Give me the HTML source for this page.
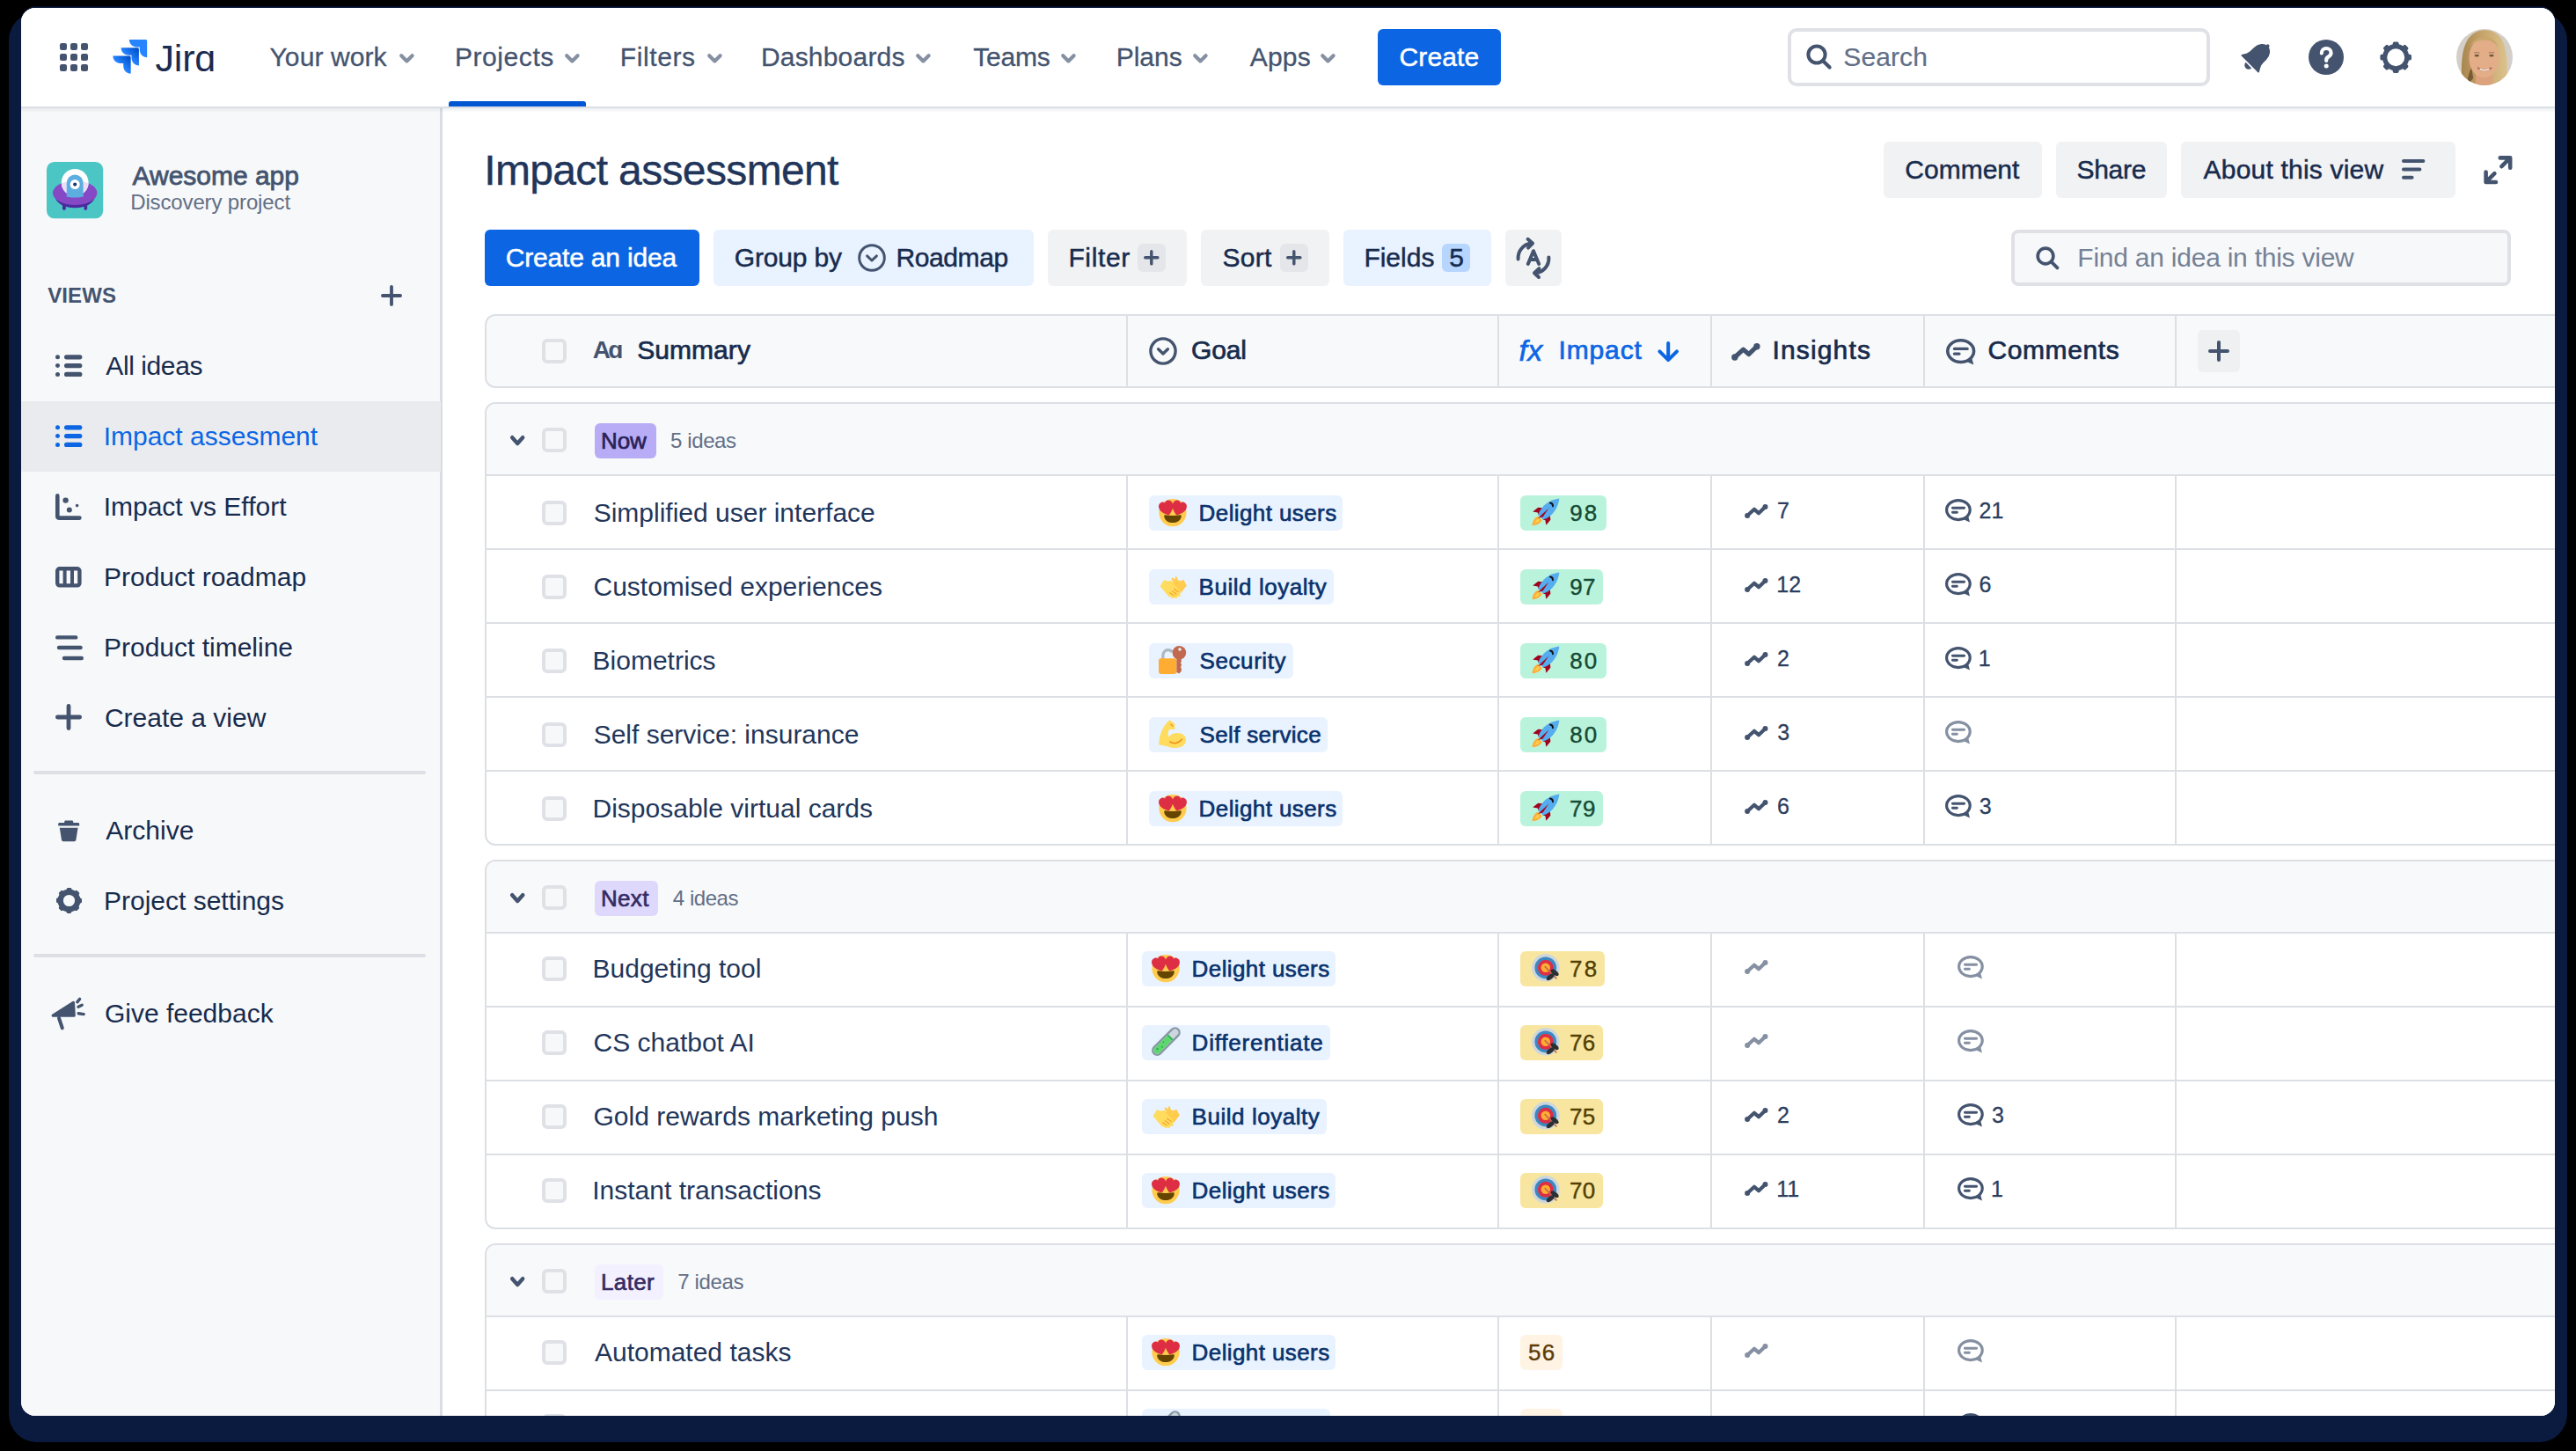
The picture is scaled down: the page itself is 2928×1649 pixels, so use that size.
<!DOCTYPE html><html><head><meta charset="utf-8"><title>Impact assessment</title><style>
html,body{margin:0;padding:0}
body{width:2928px;height:1649px;background:#000;position:relative;overflow:hidden;font-family:"Liberation Sans",sans-serif}
.frame{position:absolute;left:9.5px;top:14px;width:2908.5px;height:1624.5px;background:#0B1B3F;border-radius:32px}
.win{position:absolute;left:24px;top:9px;width:2880px;height:1600px;border-radius:16px;overflow:hidden;background:#fff;box-shadow:0 -1.5px 0 0 #0B1B3F}
.app{position:absolute;left:0;top:0;width:1440px;height:800px;zoom:2;overflow:hidden}
.t{position:absolute;white-space:nowrap}
.b{position:absolute}
.i{position:absolute;overflow:visible}

</style></head><body><div class="frame"></div><div class="win"><div class="app">
<div class="b" style="left:0px;top:56px;width:238.5px;height:744px;background:#F7F8F9"></div>
<div class="b" style="left:238.1px;top:56px;width:1.6px;height:744px;background:#D9DDE3"></div>
<div class="b" style="left:0px;top:0px;width:1440px;height:56px;background:#fff"></div>
<div class="b" style="left:0px;top:56px;width:1440px;height:1px;background:#DCDFE4"></div>
<div class="b" style="left:0px;top:57px;width:1440px;height:2.5px;background:linear-gradient(rgba(9,30,66,0.07),rgba(9,30,66,0))"></div>
<svg class="i" style="left:22px;top:20px;" width="16" height="16" viewBox="0 0 16 16"><rect x="0" y="0" width="4" height="4" rx="1.1" fill="#44546F"/><rect x="6" y="0" width="4" height="4" rx="1.1" fill="#44546F"/><rect x="12" y="0" width="4" height="4" rx="1.1" fill="#44546F"/><rect x="0" y="6" width="4" height="4" rx="1.1" fill="#44546F"/><rect x="6" y="6" width="4" height="4" rx="1.1" fill="#44546F"/><rect x="12" y="6" width="4" height="4" rx="1.1" fill="#44546F"/><rect x="0" y="12" width="4" height="4" rx="1.1" fill="#44546F"/><rect x="6" y="12" width="4" height="4" rx="1.1" fill="#44546F"/><rect x="12" y="12" width="4" height="4" rx="1.1" fill="#44546F"/></svg>
<svg class="i" style="left:52.3px;top:18px;" width="19.5" height="19.4" viewBox="0 0 19.5 19.4"><defs><linearGradient id="jg1" x1="1" y1="0" x2="0.45" y2="0.55"><stop offset="0.18" stop-color="#0052CC"/><stop offset="1" stop-color="#2684FF"/></linearGradient></defs><g transform="scale(0.826)"><g transform="translate(10.8 0)"><path d="M11.3 0 H0 C0 2.8 2.3 5.1 5.1 5.1 H7.2 V7.1 C7.2 9.9 9.5 12.2 12.3 12.2 V1 C12.3 0.4 11.9 0 11.3 0 Z" fill="#2684FF"/></g><g transform="translate(5.2 5.6)"><path d="M11.3 0 H0 C0 2.8 2.3 5.1 5.1 5.1 H7.2 V7.1 C7.2 9.9 9.5 12.2 12.3 12.2 V1 C12.3 0.4 11.9 0 11.3 0 Z" fill="url(#jg1)"/></g><g transform="translate(-0.4 11.2)"><path d="M11.3 0 H0 C0 2.8 2.3 5.1 5.1 5.1 H7.2 V7.1 C7.2 9.9 9.5 12.2 12.3 12.2 V1 C12.3 0.4 11.9 0 11.3 0 Z" fill="url(#jg1)"/></g></g></svg>
<div class="t" style="left:76.27px;top:11.3px;font-size:21.5px;line-height:34px;color:#1B2B50;letter-spacing:-0.11px">Jirɑ</div>
<div class="t" style="left:141.25px;top:16px;font-size:15px;line-height:24px;color:#44546F;letter-spacing:0.05px;-webkit-text-stroke:0.15px #44546F">Your work</div>
<svg class="i" style="left:214.9px;top:26px;" width="8.4" height="5.4" viewBox="0 0 8.4 5.4"><path d="M1.1 1.1 L4.2 4.2 L7.3 1.1" fill="none" stroke="#8590A2" stroke-width="2.1" stroke-linecap="round" stroke-linejoin="round"/></svg>
<div class="t" style="left:246.45px;top:16px;font-size:15px;line-height:24px;color:#44546F;letter-spacing:0.29px;-webkit-text-stroke:0.15px #44546F">Projects</div>
<svg class="i" style="left:309.2px;top:26px;" width="8.4" height="5.4" viewBox="0 0 8.4 5.4"><path d="M1.1 1.1 L4.2 4.2 L7.3 1.1" fill="none" stroke="#8590A2" stroke-width="2.1" stroke-linecap="round" stroke-linejoin="round"/></svg>
<div class="t" style="left:340.35px;top:16px;font-size:15px;line-height:24px;color:#44546F;letter-spacing:0.31px;-webkit-text-stroke:0.15px #44546F">Filters</div>
<svg class="i" style="left:389.8px;top:26px;" width="8.4" height="5.4" viewBox="0 0 8.4 5.4"><path d="M1.1 1.1 L4.2 4.2 L7.3 1.1" fill="none" stroke="#8590A2" stroke-width="2.1" stroke-linecap="round" stroke-linejoin="round"/></svg>
<div class="t" style="left:420.45px;top:16px;font-size:15px;line-height:24px;color:#44546F;letter-spacing:0.1px;-webkit-text-stroke:0.15px #44546F">Dashboards</div>
<svg class="i" style="left:508.7px;top:26px;" width="8.4" height="5.4" viewBox="0 0 8.4 5.4"><path d="M1.1 1.1 L4.2 4.2 L7.3 1.1" fill="none" stroke="#8590A2" stroke-width="2.1" stroke-linecap="round" stroke-linejoin="round"/></svg>
<div class="t" style="left:541.15px;top:16px;font-size:15px;line-height:24px;color:#44546F;letter-spacing:-0.12px;-webkit-text-stroke:0.15px #44546F">Teams</div>
<svg class="i" style="left:591px;top:26px;" width="8.4" height="5.4" viewBox="0 0 8.4 5.4"><path d="M1.1 1.1 L4.2 4.2 L7.3 1.1" fill="none" stroke="#8590A2" stroke-width="2.1" stroke-linecap="round" stroke-linejoin="round"/></svg>
<div class="t" style="left:622.35px;top:16px;font-size:15px;line-height:24px;color:#44546F;letter-spacing:-0.01px;-webkit-text-stroke:0.15px #44546F">Plans</div>
<svg class="i" style="left:666px;top:26px;" width="8.4" height="5.4" viewBox="0 0 8.4 5.4"><path d="M1.1 1.1 L4.2 4.2 L7.3 1.1" fill="none" stroke="#8590A2" stroke-width="2.1" stroke-linecap="round" stroke-linejoin="round"/></svg>
<div class="t" style="left:698.35px;top:16px;font-size:15px;line-height:24px;color:#44546F;letter-spacing:0.1px;-webkit-text-stroke:0.15px #44546F">Apps</div>
<svg class="i" style="left:738.5px;top:26px;" width="8.4" height="5.4" viewBox="0 0 8.4 5.4"><path d="M1.1 1.1 L4.2 4.2 L7.3 1.1" fill="none" stroke="#8590A2" stroke-width="2.1" stroke-linecap="round" stroke-linejoin="round"/></svg>
<div class="b" style="left:243px;top:53px;width:78px;height:3px;background:#0056D2;border-radius:1.5px 1.5px 0 0"></div>
<div class="b" style="left:771px;top:12px;width:70px;height:32px;background:#0C66E4;border-radius:3px"></div>
<div class="t" style="left:783.27px;top:16px;font-size:15px;line-height:24px;color:#fff;letter-spacing:0.07px;-webkit-text-stroke:0.24px #fff">Create</div>
<div class="b" style="left:1004px;top:11.25px;width:240px;height:33.25px;border:2px solid #DFE1E6;border-radius:5px;box-sizing:border-box;background:#fff"></div>
<svg class="i" style="left:1014.6px;top:20.6px;" width="14.4" height="14.4" viewBox="0 0 14.4 14.4"><g transform="scale(1)"><circle cx="6" cy="6" r="4.8" fill="none" stroke="#44546F" stroke-width="2"/><path d="M9.6 9.6 L13.3 13.3" stroke="#44546F" stroke-width="2.1" stroke-linecap="round"/></g></svg>
<div class="t" style="left:1035.67px;top:16px;font-size:15px;line-height:24px;color:#626F86;letter-spacing:0.05px;-webkit-text-stroke:0.1px #626F86">Search</div>
<svg class="i" style="left:1262.5px;top:15px;" width="24" height="24" viewBox="0 0 24 24"><g transform="translate(8.6 12.4) rotate(45)"><path d="M-6.6 6 H6.6 L5.2 3.6 C4.7 2.7 4.5 1.8 4.5 0.4 V-1.8 C4.5 -5.2 2.4 -7.6 0 -7.6 C-2.4 -7.6 -4.5 -5.2 -4.5 -1.8 V0.4 C-4.5 1.8 -4.7 2.7 -5.2 3.6 Z" fill="#44546F" stroke="#44546F" stroke-width="0.9" stroke-linejoin="round"/><circle cx="0" cy="-8.1" r="0.95" fill="#44546F"/><path d="M-2.3 7.3 A2.3 2.3 0 0 0 2.3 7.3 Z" fill="#44546F"/></g></svg>
<svg class="i" style="left:1300px;top:18px;" width="20" height="20" viewBox="0 0 20 20"><circle cx="10" cy="10" r="10" fill="#44546F"/><path d="M7.4 7.7 C7.4 6.1 8.6 5 10.1 5 C11.6 5 12.8 6.1 12.8 7.5 C12.8 8.8 12 9.3 11.2 9.8 C10.5 10.2 10.1 10.7 10.1 11.5 V12" fill="none" stroke="#fff" stroke-width="2.1" stroke-linecap="round"/><circle cx="10.1" cy="15" r="1.25" fill="#fff"/></svg>
<svg class="i" style="left:1340.6px;top:19.2px;" width="18.2" height="18.2" viewBox="0 0 18.2 18.2"><rect x="7.4" y="0.2" width="3.4" height="3.6" rx="0.9" fill="#44546F" transform="rotate(0 9.1 9.1)"/><rect x="7.4" y="0.2" width="3.4" height="3.6" rx="0.9" fill="#44546F" transform="rotate(45 9.1 9.1)"/><rect x="7.4" y="0.2" width="3.4" height="3.6" rx="0.9" fill="#44546F" transform="rotate(90 9.1 9.1)"/><rect x="7.4" y="0.2" width="3.4" height="3.6" rx="0.9" fill="#44546F" transform="rotate(135 9.1 9.1)"/><rect x="7.4" y="0.2" width="3.4" height="3.6" rx="0.9" fill="#44546F" transform="rotate(180 9.1 9.1)"/><rect x="7.4" y="0.2" width="3.4" height="3.6" rx="0.9" fill="#44546F" transform="rotate(225 9.1 9.1)"/><rect x="7.4" y="0.2" width="3.4" height="3.6" rx="0.9" fill="#44546F" transform="rotate(270 9.1 9.1)"/><rect x="7.4" y="0.2" width="3.4" height="3.6" rx="0.9" fill="#44546F" transform="rotate(315 9.1 9.1)"/><circle cx="9.1" cy="9.1" r="6.3" fill="none" stroke="#44546F" stroke-width="2.6"/></svg>
<svg class="i" style="left:1384px;top:12px;" width="32" height="32" viewBox="0 0 32 32"><defs><clipPath id="avc"><circle cx="16" cy="16" r="16"/></clipPath><linearGradient id="hairg" x1="0" y1="0" x2="1" y2="0"><stop offset="0" stop-color="#A8864F"/><stop offset="0.5" stop-color="#C9A66C"/><stop offset="1" stop-color="#DCC38E"/></linearGradient></defs><g clip-path="url(#avc)"><rect width="32" height="32" fill="#D3CFC8"/><path d="M3.5 32 C2.5 24 2.8 14 5 9 C7 3.5 11 0.6 16.2 0.6 C21.6 0.6 25.4 3.6 27.2 9 C29 14.5 29.4 24 28.6 32 Z" fill="url(#hairg)"/><path d="M6 32 C6.5 27 7.4 24 8.6 22 L9.6 28 Z" fill="#5E4426" opacity="0.7"/><rect x="11" y="25" width="9.6" height="8" fill="#DCA27E"/><ellipse cx="15.7" cy="16.4" rx="8.5" ry="11.4" fill="#E2AD87"/><path d="M7.6 10 C9.5 6 12.5 4.6 15.8 4.6 C19.6 4.6 22.5 6.6 24 10.4 C21.8 7.6 19 6.3 16 6.3 C12.8 6.3 10 7.5 7.6 10 Z" fill="#C9A66C"/><ellipse cx="11.6" cy="15.1" rx="1.3" ry="0.7" fill="#6E5A3E"/><ellipse cx="20" cy="15.1" rx="1.3" ry="0.7" fill="#6E5A3E"/><path d="M10 13.6 Q11.6 12.9 13.2 13.6 M18.4 13.6 Q20 12.9 21.6 13.6" fill="none" stroke="#A07E58" stroke-width="0.6"/><path d="M12.3 22.2 Q16 24.6 19.8 22.2" fill="none" stroke="#B56D5C" stroke-width="1" stroke-linecap="round"/><path d="M13.6 22.9 Q16 23.9 18.4 22.9" fill="none" stroke="#F4EEE8" stroke-width="0.8" stroke-linecap="round"/></g></svg>
<svg class="i" style="left:14.5px;top:87.4px;" width="32.1" height="32.1" viewBox="0 0 32.1 32.1"><defs><clipPath id="ufoc"><ellipse cx="16.1" cy="17.6" rx="12.6" ry="6.9"/></clipPath></defs><rect width="32.1" height="32.1" rx="4.3" fill="#4BC6C4"/><rect x="9" y="22.5" width="1.9" height="4.9" rx="0.95" fill="#4A2A9E"/><rect x="21.2" y="22.5" width="1.9" height="4.9" rx="0.95" fill="#4A2A9E"/><ellipse cx="16.1" cy="19.2" rx="11.4" ry="6.9" fill="#4A2A9E"/><ellipse cx="16.1" cy="17.6" rx="12.6" ry="6.9" fill="#8549C6"/><circle cx="16.1" cy="11.7" r="7.7" fill="#fff"/><g clip-path="url(#ufoc)"><circle cx="16.1" cy="11.7" r="7.7" fill="#E8E0F6"/></g><path d="M11.4 19.6 V11.9 A4.7 4.7 0 0 1 20.8 11.9 V19.6 Z" fill="#5DAEE0"/><ellipse cx="16.1" cy="19.4" rx="4.9" ry="0.9" fill="#5DAEE0"/><circle cx="16.1" cy="12.8" r="2.75" fill="#fff"/><circle cx="16.1" cy="12.8" r="1.05" fill="#1E3A6E"/></svg>
<div class="t" style="left:63.28px;top:83.65px;font-size:15px;line-height:24px;color:#44546F;letter-spacing:-0.01px;-webkit-text-stroke:0.4px #44546F">Awesome app</div>
<div class="t" style="left:62.12px;top:100.95px;font-size:12px;line-height:19px;color:#626F86;letter-spacing:-0.07px">Discovery project</div>
<div class="t" style="left:15.12px;top:153.8px;font-size:12px;line-height:19px;color:#44546F;letter-spacing:0.04px;font-weight:700">VIEWS</div>
<svg class="i" style="left:204.7px;top:157.7px;" width="12" height="12" viewBox="0 0 12 12"><path d="M6 0.95 V11.05 M0.95 6 H11.05" stroke="#44546F" stroke-width="1.9" stroke-linecap="round"/></svg>
<svg class="i" style="left:19.7px;top:197px;" width="15.2" height="12.6" viewBox="0 0 15.2 12.6"><circle cx="1.25" cy="1.4" r="1.25" fill="#44546F"/><circle cx="1.25" cy="6.3" r="1.25" fill="#44546F"/><circle cx="1.25" cy="11.2" r="1.25" fill="#44546F"/><rect x="5" y="0.1" width="10.2" height="2.6" rx="1.3" fill="#44546F"/><rect x="5" y="5" width="10.2" height="2.6" rx="1.3" fill="#44546F"/><rect x="5" y="9.9" width="10.2" height="2.6" rx="1.3" fill="#44546F"/></svg>
<div class="t" style="left:48.18px;top:191.3px;font-size:15px;line-height:24px;color:#172B4D;letter-spacing:-0.21px">All ideas</div>
<div class="b" style="left:0px;top:223.3px;width:238.5px;height:40px;background:#E9EBEE"></div>
<svg class="i" style="left:19.7px;top:237px;" width="15.2" height="12.6" viewBox="0 0 15.2 12.6"><circle cx="1.25" cy="1.4" r="1.25" fill="#0C66E4"/><circle cx="1.25" cy="6.3" r="1.25" fill="#0C66E4"/><circle cx="1.25" cy="11.2" r="1.25" fill="#0C66E4"/><rect x="5" y="0.1" width="10.2" height="2.6" rx="1.3" fill="#0C66E4"/><rect x="5" y="5" width="10.2" height="2.6" rx="1.3" fill="#0C66E4"/><rect x="5" y="9.9" width="10.2" height="2.6" rx="1.3" fill="#0C66E4"/></svg>
<div class="t" style="left:46.83px;top:231.3px;font-size:15px;line-height:24px;color:#0C66E4">Impact assesment</div>
<svg class="i" style="left:19.7px;top:276px;" width="15" height="15" viewBox="0 0 15 15"><path d="M1.15 1.2 V12.9 C1.15 13.5 1.5 13.8 2 13.8 H13.7" fill="none" stroke="#44546F" stroke-width="2.3" stroke-linecap="round"/><circle cx="5.8" cy="3.8" r="1.6" fill="#44546F"/><circle cx="7.9" cy="9.3" r="1.5" fill="#44546F"/><circle cx="12.3" cy="6.8" r="0.9" fill="#44546F"/></svg>
<div class="t" style="left:46.83px;top:271.3px;font-size:15px;line-height:24px;color:#172B4D">Impact vs Effort</div>
<svg class="i" style="left:19.7px;top:317.4px;" width="15" height="12" viewBox="0 0 15 12"><rect x="1.1" y="1.1" width="12.6" height="9.6" rx="1.3" fill="none" stroke="#44546F" stroke-width="2.2"/><path d="M5.3 1.1 V10.7 M9.5 1.1 V10.7" stroke="#44546F" stroke-width="2"/></svg>
<div class="t" style="left:46.98px;top:311.3px;font-size:15px;line-height:24px;color:#172B4D">Product roadmap</div>
<svg class="i" style="left:19.3px;top:356.3px;" width="16" height="14" viewBox="0 0 16 14"><path d="M1.1 1.2 H11.6 M2 7 H14.3 M5 13 H14.9" stroke="#44546F" stroke-width="2.2" stroke-linecap="round"/></svg>
<div class="t" style="left:46.98px;top:351.3px;font-size:15px;line-height:24px;color:#172B4D">Product timeline</div>
<svg class="i" style="left:19.3px;top:395.7px;" width="15" height="15" viewBox="0 0 15 15"><path d="M7.5 1.2 V13.8 M1.2 7.5 H13.8" stroke="#44546F" stroke-width="2.4" stroke-linecap="round"/></svg>
<div class="t" style="left:47.45px;top:391.3px;font-size:15px;line-height:24px;color:#172B4D">Create a view</div>
<div class="b" style="left:7px;top:433.5px;width:223px;height:2px;background:#DCDFE4;border-radius:1px"></div>
<svg class="i" style="left:20.9px;top:461.4px;" width="12.2" height="12.2" viewBox="0 0 12.2 12.2"><path d="M4.3 0.3 H7.9 C8.3 0.3 8.6 0.6 8.6 1 V1.5 H11.4 C11.8 1.5 12.1 1.8 12.1 2.2 V3.3 H0.1 V2.2 C0.1 1.8 0.4 1.5 0.8 1.5 H3.6 V1 C3.6 0.6 3.9 0.3 4.3 0.3 Z" fill="#44546F"/><path d="M0.9 4.4 H11.3 L10.2 11.3 C10.1 11.8 9.7 12.1 9.2 12.1 H3 C2.5 12.1 2.1 11.8 2 11.3 Z" fill="#44546F"/></svg>
<div class="t" style="left:48.18px;top:455.55px;font-size:15px;line-height:24px;color:#172B4D">Archive</div>
<svg class="i" style="left:19.95px;top:500.2px;" width="14.5" height="14.5" viewBox="0 0 14.5 14.5"><rect x="5.9" y="0" width="2.8" height="3" rx="0.7" fill="#44546F" transform="rotate(0 7.25 7.25)"/><rect x="5.9" y="0" width="2.8" height="3" rx="0.7" fill="#44546F" transform="rotate(45 7.25 7.25)"/><rect x="5.9" y="0" width="2.8" height="3" rx="0.7" fill="#44546F" transform="rotate(90 7.25 7.25)"/><rect x="5.9" y="0" width="2.8" height="3" rx="0.7" fill="#44546F" transform="rotate(135 7.25 7.25)"/><rect x="5.9" y="0" width="2.8" height="3" rx="0.7" fill="#44546F" transform="rotate(180 7.25 7.25)"/><rect x="5.9" y="0" width="2.8" height="3" rx="0.7" fill="#44546F" transform="rotate(225 7.25 7.25)"/><rect x="5.9" y="0" width="2.8" height="3" rx="0.7" fill="#44546F" transform="rotate(270 7.25 7.25)"/><rect x="5.9" y="0" width="2.8" height="3" rx="0.7" fill="#44546F" transform="rotate(315 7.25 7.25)"/><circle cx="7.25" cy="7.25" r="4.9" fill="none" stroke="#44546F" stroke-width="3.2"/></svg>
<div class="t" style="left:46.98px;top:495.55px;font-size:15px;line-height:24px;color:#172B4D">Project settings</div>
<div class="b" style="left:7px;top:537.5px;width:223px;height:2px;background:#DCDFE4;border-radius:1px"></div>
<svg class="i" style="left:17px;top:562px;" width="19.5" height="19.5" viewBox="0 0 19.5 19.5"><path d="M1.1 10.6 L12.7 3.2 L13.1 10.6 Z" fill="#44546F" stroke="#44546F" stroke-width="1.6" stroke-linejoin="round"/><path d="M4.5 12 L6.4 17.7" stroke="#44546F" stroke-width="2" stroke-linecap="round"/><path d="M14.9 2.9 L16.3 1.2 M15.5 5.6 L17.6 4.6 M15.6 9.4 L18.6 9.8" stroke="#44546F" stroke-width="1.7" stroke-linecap="round"/></svg>
<div class="t" style="left:47.45px;top:559.5px;font-size:15px;line-height:24px;color:#172B4D">Give feedback</div>
<div class="t" style="left:263.1px;top:73.5px;font-size:24px;line-height:38px;color:#21355A;letter-spacing:-0.32px;-webkit-text-stroke:0.2px #21355A">Impact assessment</div>
<div class="b" style="left:1058.6px;top:76px;width:89.9px;height:32px;background:#F1F2F4;border-radius:3px"></div>
<div class="t" style="left:1070.67px;top:80px;font-size:15px;line-height:24px;color:#172B4D;-webkit-text-stroke:0.24px #172B4D">Comment</div>
<div class="b" style="left:1156.4px;top:76px;width:63px;height:32px;background:#F1F2F4;border-radius:3px"></div>
<div class="t" style="left:1168.24px;top:80px;font-size:15px;line-height:24px;color:#172B4D;letter-spacing:-0.14px;-webkit-text-stroke:0.24px #172B4D">Share</div>
<div class="b" style="left:1227.5px;top:76px;width:155.9px;height:32px;background:#F1F2F4;border-radius:3px"></div>
<div class="t" style="left:1240.29px;top:80px;font-size:15px;line-height:24px;color:#172B4D;letter-spacing:0.1px;-webkit-text-stroke:0.24px #172B4D">About this view</div>
<svg class="i" style="left:1352.8px;top:86.2px;" width="13.2" height="11.4" viewBox="0 0 13.2 11.4"><path d="M1 1 H12.2 M1 5.7 H10.2 M1 10.4 H5.8" stroke="#44546F" stroke-width="2" stroke-linecap="round"/></svg>
<svg class="i" style="left:1399.3px;top:84px;" width="16.4" height="16.2" viewBox="0 0 16.4 16.2"><path d="M9.4 1.2 H15.1 V6.9 M15.1 1.2 L10.2 6.1 M7 15 H1.3 V9.3 M1.3 15 L6.2 10.1" fill="none" stroke="#44546F" stroke-width="2.3" stroke-linecap="round" stroke-linejoin="round"/></svg>
<div class="b" style="left:263.7px;top:126px;width:121.7px;height:32px;background:#0C66E4;border-radius:3px"></div>
<div class="t" style="left:275.37px;top:130px;font-size:15px;line-height:24px;color:#fff;letter-spacing:-0.09px;-webkit-text-stroke:0.24px #fff">Create an idea</div>
<div class="b" style="left:393.6px;top:126px;width:181.7px;height:32px;background:#E9F2FF;border-radius:3px"></div>
<div class="t" style="left:405.37px;top:130px;font-size:15px;line-height:24px;color:#172B4D;letter-spacing:-0.08px;-webkit-text-stroke:0.24px #172B4D">Group by</div>
<svg class="i" style="left:475.5px;top:134px;" width="16" height="16" viewBox="0 0 16 16"><g transform="scale(1)"><circle cx="8" cy="8" r="7.15" fill="none" stroke="#44546F" stroke-width="1.5"/><path d="M5.3 6.9 L8 9.5 L10.7 6.9" fill="none" stroke="#44546F" stroke-width="1.5" stroke-linecap="round" stroke-linejoin="round"/></g></svg>
<div class="t" style="left:497.29px;top:130px;font-size:15px;line-height:24px;color:#172B4D;letter-spacing:-0.21px;-webkit-text-stroke:0.24px #172B4D">Roadmap</div>
<div class="b" style="left:583.4px;top:126px;width:79.1px;height:32px;background:#F1F2F4;border-radius:3px"></div>
<div class="t" style="left:595.19px;top:130px;font-size:15px;line-height:24px;color:#172B4D;letter-spacing:0.32px;-webkit-text-stroke:0.24px #172B4D">Filter</div>
<div class="b" style="left:634.6px;top:134px;width:16px;height:16px;background:#E4E6EA;border-radius:3px"></div>
<svg class="i" style="left:638.2px;top:137.6px;" width="8.8" height="8.8" viewBox="0 0 8.8 8.8"><path d="M4.4 0.85 V7.95 M0.85 4.4 H7.95" stroke="#44546F" stroke-width="1.7" stroke-linecap="round"/></svg>
<div class="b" style="left:670.4px;top:126px;width:73.1px;height:32px;background:#F1F2F4;border-radius:3px"></div>
<div class="t" style="left:682.75px;top:130px;font-size:15px;line-height:24px;color:#172B4D;letter-spacing:0.14px;-webkit-text-stroke:0.24px #172B4D">Sort</div>
<div class="b" style="left:715.4px;top:134px;width:16px;height:16px;background:#E4E6EA;border-radius:3px"></div>
<svg class="i" style="left:719px;top:137.6px;" width="8.8" height="8.8" viewBox="0 0 8.8 8.8"><path d="M4.4 0.85 V7.95 M0.85 4.4 H7.95" stroke="#44546F" stroke-width="1.7" stroke-linecap="round"/></svg>
<div class="b" style="left:751.4px;top:126px;width:84.1px;height:32px;background:#E9F2FF;border-radius:3px"></div>
<div class="t" style="left:763.19px;top:130px;font-size:15px;line-height:24px;color:#172B4D;-webkit-text-stroke:0.24px #172B4D">Fields</div>
<div class="b" style="left:807.5px;top:134px;width:16px;height:16px;background:#B6D5FF;border-radius:3px"></div>
<div class="t" style="left:811.62px;top:130px;font-size:15px;line-height:24px;color:#172B4D;-webkit-text-stroke:0.24px #172B4D">5</div>
<div class="b" style="left:843.6px;top:126px;width:32px;height:32px;background:#F1F2F4;border-radius:3px"></div>
<svg class="i" style="left:849.5px;top:130.3px;" width="20" height="23.4" viewBox="0 0 20 23.4"><path d="M1.3 12.2 C1 7.5 4.3 3.6 9.2 3.3" fill="none" stroke="#44546F" stroke-width="2" stroke-linecap="round"/><path d="M6.8 0.9 L9.5 3.3 L7 5.8" fill="none" stroke="#44546F" stroke-width="2" stroke-linecap="round" stroke-linejoin="round"/><path d="M18.7 11.2 C19 15.9 15.7 19.8 10.8 20.1" fill="none" stroke="#44546F" stroke-width="2" stroke-linecap="round"/><path d="M13.2 17.6 L10.5 20.1 L13 22.5" fill="none" stroke="#44546F" stroke-width="2" stroke-linecap="round" stroke-linejoin="round"/><path d="M6.9 15 L10 7.6 L13.1 15 M8 12.5 H12" fill="none" stroke="#44546F" stroke-width="2" stroke-linecap="round" stroke-linejoin="round"/></svg>
<div class="b" style="left:1131px;top:126px;width:284.2px;height:32px;border:2px solid #DFE1E6;border-radius:4px;box-sizing:border-box;background:#F7F8F9"></div>
<svg class="i" style="left:1145px;top:135.5px;" width="13.2" height="13.2" viewBox="0 0 13.2 13.2"><g transform="scale(0.92)"><circle cx="6" cy="6" r="4.8" fill="none" stroke="#44546F" stroke-width="2"/><path d="M9.6 9.6 L13.3 13.3" stroke="#44546F" stroke-width="2.1" stroke-linecap="round"/></g></svg>
<div class="t" style="left:1168.68px;top:130px;font-size:15px;line-height:24px;color:#758195;letter-spacing:-0.12px">Find an idea in this view</div>
<div class="b" style="left:263.5px;top:174px;width:1300px;height:42px;border:1px solid #DCDFE4;border-radius:6px 0 0 6px;box-sizing:border-box;background:#F8F9FA"></div>
<div class="b" style="left:628px;top:175px;width:1px;height:40px;background:#DCDFE4"></div>
<div class="b" style="left:839px;top:175px;width:1px;height:40px;background:#DCDFE4"></div>
<div class="b" style="left:960px;top:175px;width:1px;height:40px;background:#DCDFE4"></div>
<div class="b" style="left:1081px;top:175px;width:1px;height:40px;background:#DCDFE4"></div>
<div class="b" style="left:1224px;top:175px;width:1px;height:40px;background:#DCDFE4"></div>
<div class="b" style="left:296px;top:188px;width:14px;height:14px;border:2px solid #DFE1E6;border-radius:3px;background:#F7F8F9;box-sizing:border-box"></div>
<div class="t" style="left:324.85px;top:183.3px;font-size:14px;line-height:22px;color:#44546F;letter-spacing:-1.3px;font-weight:700">Aɑ</div>
<div class="t" style="left:350.1px;top:182.6px;font-size:15px;line-height:24px;color:#172B4D;letter-spacing:0.03px;-webkit-text-stroke:0.35px #172B4D">Summary</div>
<svg class="i" style="left:641px;top:187px;" width="16" height="16" viewBox="0 0 16 16"><g transform="scale(1)"><circle cx="8" cy="8" r="7.05" fill="none" stroke="#44546F" stroke-width="1.7"/><path d="M5.3 6.9 L8 9.5 L10.7 6.9" fill="none" stroke="#44546F" stroke-width="1.7" stroke-linecap="round" stroke-linejoin="round"/></g></svg>
<div class="t" style="left:665.02px;top:182.6px;font-size:15px;line-height:24px;color:#172B4D;letter-spacing:-0.1px;-webkit-text-stroke:0.35px #172B4D">Goal</div>
<div class="t" style="left:851.27px;top:181.1px;font-size:17px;line-height:27px;color:#0C66E4;letter-spacing:0.17px;font-style:italic;-webkit-text-stroke:0.3px #0C66E4">fx</div>
<div class="t" style="left:873.8px;top:182.6px;font-size:15px;line-height:24px;color:#0C66E4;letter-spacing:0.42px;-webkit-text-stroke:0.35px #0C66E4">Impact</div>
<svg class="i" style="left:929.8px;top:189.5px;" width="12.2" height="11.6" viewBox="0 0 12.2 11.6"><path d="M6.1 1 V10.4 M1.2 5.7 L6.1 10.6 L11 5.7" fill="none" stroke="#0C66E4" stroke-width="2" stroke-linecap="round" stroke-linejoin="round"/></svg>
<svg class="i" style="left:971.8px;top:190.3px;" width="16.3" height="9.8" viewBox="0 0 16.3 9.8"><g transform="scale(1.23)"><path d="M1.55 6.5 L5.5 2.9 L8 5.1 L11.75 1.5" fill="none" stroke="#44546F" stroke-width="2.1" stroke-linecap="round" stroke-linejoin="round"/><circle cx="1.55" cy="6.5" r="1.5" fill="#44546F"/><circle cx="11.75" cy="1.5" r="1.5" fill="#44546F"/></g></svg>
<div class="t" style="left:995.2px;top:182.6px;font-size:15px;line-height:24px;color:#172B4D;letter-spacing:0.58px;-webkit-text-stroke:0.35px #172B4D">Insights</div>
<svg class="i" style="left:1093.8px;top:188.1px;" width="16.7" height="15.02" viewBox="0 0 16.7 15.02"><g transform="scale(1.12)"><ellipse cx="7.45" cy="6.3" rx="6.65" ry="5.5" fill="none" stroke="#44546F" stroke-width="1.6"/><path d="M10.4 11.6 L14 13.2 L13.1 9.9 Z" fill="#44546F"/><path d="M4.2 5.1 H10.8 M4.2 7.6 H6.7" stroke="#44546F" stroke-width="1.45" stroke-linecap="round"/></g></svg>
<div class="t" style="left:1117.72px;top:182.6px;font-size:15px;line-height:24px;color:#172B4D;letter-spacing:0.3px;-webkit-text-stroke:0.35px #172B4D">Comments</div>
<div class="b" style="left:1237px;top:183px;width:24px;height:24px;background:#EFF0F2;border-radius:3px"></div>
<svg class="i" style="left:1243px;top:189px;" width="12" height="12" viewBox="0 0 12 12"><path d="M6 1 V11 M1 6 H11" stroke="#44546F" stroke-width="2" stroke-linecap="round"/></svg>
<div class="b" style="left:263.5px;top:224px;width:1300px;height:252px;border:1px solid #DCDFE4;border-radius:6px 0 0 6px;box-sizing:border-box;background:#fff"></div>
<div class="b" style="left:264.5px;top:225px;width:1298px;height:40px;background:#F8F9FA;border-radius:5px 0 0 0"></div>
<div class="b" style="left:264.5px;top:265px;width:1298px;height:1px;background:#DCDFE4"></div>
<svg class="i" style="left:277.9px;top:243px;" width="8.2" height="5.8" viewBox="0 0 8.2 5.8"><path d="M1.1 1.1 L4.1 4.5 L7.1 1.1" fill="none" stroke="#44546F" stroke-width="2.2" stroke-linecap="round" stroke-linejoin="round"/></svg>
<div class="b" style="left:296px;top:238.5px;width:14px;height:14px;border:2px solid #DFE1E6;border-radius:3px;background:#F7F8F9;box-sizing:border-box"></div>
<div class="b" style="left:326.2px;top:236.2px;width:34.8px;height:19.6px;background:#B8ACF6;border-radius:3px"></div>
<div class="t" style="left:329.52px;top:235.4px;font-size:13px;line-height:21px;color:#2B2257;letter-spacing:-0.08px;-webkit-text-stroke:0.35px #2B2257">Now</div>
<div class="t" style="left:369.02px;top:236.5px;font-size:12px;line-height:19px;color:#626F86;letter-spacing:-0.2px">5 ideas</div>
<div class="b" style="left:628px;top:266px;width:1px;height:41px;background:#DCDFE4"></div>
<div class="b" style="left:839px;top:266px;width:1px;height:41px;background:#DCDFE4"></div>
<div class="b" style="left:960px;top:266px;width:1px;height:41px;background:#DCDFE4"></div>
<div class="b" style="left:1081px;top:266px;width:1px;height:41px;background:#DCDFE4"></div>
<div class="b" style="left:1224px;top:266px;width:1px;height:41px;background:#DCDFE4"></div>
<div class="b" style="left:296px;top:279.9px;width:14px;height:14px;border:2px solid #DFE1E6;border-radius:3px;background:#F7F8F9;box-sizing:border-box"></div>
<div class="t" style="left:325.32px;top:275px;font-size:15px;line-height:24px;color:#22365A">Simplified user interface</div>
<div class="b" style="left:641px;top:277px;width:110px;height:20px;background:#E9F2FF;border-radius:3px"></div>
<svg class="i" style="left:646.6px;top:278.5px;" width="16" height="16" viewBox="0 0 16 16"><circle cx="8" cy="8.3" r="7.8" fill="#FFCC4D"/><path d="M3.9 9.6 C5.3 9.9 6.6 10 8 10 C9.4 10 10.7 9.9 12.1 9.6 C12.5 9.5 12.9 9.7 12.9 10.2 C12.9 12 11 14 8 14 C5 14 3.1 12 3.1 10.2 C3.1 9.7 3.5 9.5 3.9 9.6 Z" fill="#664500"/><g transform="translate(3.9 3.9) rotate(-18)"><path d="M0 6.2 C-2.6 4.2 -4.1 2.7 -4.1 0.6 C-4.1 -1 -3 -2.1 -1.6 -2.1 C-0.9 -2.1 -0.3 -1.7 0 -1.1 C0.3 -1.7 0.9 -2.1 1.6 -2.1 C3 -2.1 4.1 -1 4.1 0.6 C4.1 2.7 2.6 4.2 0 6.2 Z" fill="#DD2E44"/></g><g transform="translate(12.1 3.9) rotate(18)"><path d="M0 6.2 C-2.6 4.2 -4.1 2.7 -4.1 0.6 C-4.1 -1 -3 -2.1 -1.6 -2.1 C-0.9 -2.1 -0.3 -1.7 0 -1.1 C0.3 -1.7 0.9 -2.1 1.6 -2.1 C3 -2.1 4.1 -1 4.1 0.6 C4.1 2.7 2.6 4.2 0 6.2 Z" fill="#DD2E44"/></g></svg>
<div class="t" style="left:669.31px;top:276.4px;font-size:13px;line-height:21px;color:#09326C;letter-spacing:0.2px;-webkit-text-stroke:0.32px #09326C">Delight users</div>
<div class="b" style="left:852px;top:277px;width:49px;height:20px;background:#BAF3DB;border-radius:3px"></div>
<svg class="i" style="left:858.3px;top:278.5px;" width="16" height="16" viewBox="0 0 16 16"><path d="M0.3 15.6 C0.4 13.6 1.3 11.6 3.4 10.4 L5.9 12.6 C4.7 14.6 2.6 15.5 0.3 15.6 Z" fill="#FFAC33"/><path d="M1.5 14.4 C1.9 13.2 2.6 12.3 3.6 11.6 L4.7 12.6 C4 13.6 3 14.2 1.5 14.4 Z" fill="#FFCC4D"/><path d="M0.6 7.7 L3.6 5.4 L6.4 5.6 L3.9 9.8 L3.4 8.2 Z" fill="#A0041E"/><path d="M8.2 15.4 L10.7 12.4 L10.4 9.6 L6.2 12.1 L7.7 12.6 Z" fill="#A0041E"/><path d="M15.7 0.2 C10.8 0.8 5.8 3.6 3.6 9.5 L6.5 12.3 C12.2 10.3 15.1 5.2 15.7 0.2 Z" fill="#55ACEE"/><path d="M3.5 11.5 L9.7 5.8 L6.3 10.8 Z" fill="#A0041E"/><path d="M10.5 2.8 C11.4 2.9 12 3.6 12 4.6" fill="none" stroke="#111" stroke-width="1" stroke-linecap="round"/></svg>
<div class="t" style="left:880.1px;top:276.4px;font-size:13px;line-height:21px;color:#164B35;letter-spacing:1.1px;-webkit-text-stroke:0.2px #164B35">98</div>
<svg class="i" style="left:979.3px;top:282px;" width="13.3" height="8" viewBox="0 0 13.3 8"><g transform="scale(1)"><path d="M1.55 6.5 L5.5 2.9 L8 5.1 L11.75 1.5" fill="none" stroke="#44546F" stroke-width="2.1" stroke-linecap="round" stroke-linejoin="round"/><circle cx="1.55" cy="6.5" r="1.5" fill="#44546F"/><circle cx="11.75" cy="1.5" r="1.5" fill="#44546F"/></g></svg>
<div class="t" style="left:997.95px;top:275.7px;font-size:12.5px;line-height:20px;color:#2C3E5D;-webkit-text-stroke:0.15px #2C3E5D">7</div>
<svg class="i" style="left:1093.5px;top:279.2px;" width="14.9" height="13.4" viewBox="0 0 14.9 13.4"><g transform="scale(1)"><ellipse cx="7.45" cy="6.3" rx="6.65" ry="5.5" fill="none" stroke="#44546F" stroke-width="1.6"/><path d="M10.4 11.6 L14 13.2 L13.1 9.9 Z" fill="#44546F"/><path d="M4.2 5.1 H10.8 M4.2 7.6 H6.7" stroke="#44546F" stroke-width="1.45" stroke-linecap="round"/></g></svg>
<div class="t" style="left:1112.75px;top:275.7px;font-size:12.5px;line-height:20px;color:#2C3E5D;-webkit-text-stroke:0.15px #2C3E5D">21</div>
<div class="b" style="left:264.5px;top:307px;width:1298px;height:1px;background:#DCDFE4"></div>
<div class="b" style="left:628px;top:308px;width:1px;height:41px;background:#DCDFE4"></div>
<div class="b" style="left:839px;top:308px;width:1px;height:41px;background:#DCDFE4"></div>
<div class="b" style="left:960px;top:308px;width:1px;height:41px;background:#DCDFE4"></div>
<div class="b" style="left:1081px;top:308px;width:1px;height:41px;background:#DCDFE4"></div>
<div class="b" style="left:1224px;top:308px;width:1px;height:41px;background:#DCDFE4"></div>
<div class="b" style="left:296px;top:321.9px;width:14px;height:14px;border:2px solid #DFE1E6;border-radius:3px;background:#F7F8F9;box-sizing:border-box"></div>
<div class="t" style="left:325.25px;top:317px;font-size:15px;line-height:24px;color:#22365A">Customised experiences</div>
<div class="b" style="left:641px;top:319px;width:105px;height:20px;background:#E9F2FF;border-radius:3px"></div>
<svg class="i" style="left:646.6px;top:320.5px;" width="16" height="16" viewBox="0 0 16 16"><path d="M0.8 8.1 L3 4.6 L5.3 5.3 L7.4 4.9 L10.6 7.4 L12.7 10.4 L12.2 12.6 L10.6 13.8 L9.7 14.5 L7.8 14.5 L5.9 13.8 L4.2 12.2 Z" fill="#FFDC5D"/><path d="M15.9 7.8 L14.2 4.4 L12.4 5.1 L10.9 4.6 L10.5 3.2 C10.3 2.6 9.6 2.5 9.3 3 L9.6 4.2 L8.4 3.6 C7.9 3.1 7.1 3.4 7.3 4.1 L8.6 5.6 L7.8 6.2 L9.9 8.2 L12 10.6 L12.6 12 Z" fill="#FFCC4D"/><path d="M8.8 9.6 L11.2 11.3 M7.6 10.8 L10.1 12.6 M6.3 11.9 L8.8 13.6" stroke="#F19020" stroke-width="0.55" stroke-linecap="round" opacity="0.8"/><circle cx="6.2" cy="13.3" r="0.9" fill="#FFDC5D"/><circle cx="7.9" cy="14.1" r="0.9" fill="#FFDC5D"/><circle cx="9.7" cy="14.1" r="0.9" fill="#FFDC5D"/><circle cx="11.4" cy="13.2" r="0.9" fill="#FFDC5D"/></svg>
<div class="t" style="left:669.31px;top:318.4px;font-size:13px;line-height:21px;color:#09326C;letter-spacing:0.27px;-webkit-text-stroke:0.32px #09326C">Build loyalty</div>
<div class="b" style="left:852px;top:319px;width:47px;height:20px;background:#BAF3DB;border-radius:3px"></div>
<svg class="i" style="left:858.3px;top:320.5px;" width="16" height="16" viewBox="0 0 16 16"><path d="M0.3 15.6 C0.4 13.6 1.3 11.6 3.4 10.4 L5.9 12.6 C4.7 14.6 2.6 15.5 0.3 15.6 Z" fill="#FFAC33"/><path d="M1.5 14.4 C1.9 13.2 2.6 12.3 3.6 11.6 L4.7 12.6 C4 13.6 3 14.2 1.5 14.4 Z" fill="#FFCC4D"/><path d="M0.6 7.7 L3.6 5.4 L6.4 5.6 L3.9 9.8 L3.4 8.2 Z" fill="#A0041E"/><path d="M8.2 15.4 L10.7 12.4 L10.4 9.6 L6.2 12.1 L7.7 12.6 Z" fill="#A0041E"/><path d="M15.7 0.2 C10.8 0.8 5.8 3.6 3.6 9.5 L6.5 12.3 C12.2 10.3 15.1 5.2 15.7 0.2 Z" fill="#55ACEE"/><path d="M3.5 11.5 L9.7 5.8 L6.3 10.8 Z" fill="#A0041E"/><path d="M10.5 2.8 C11.4 2.9 12 3.6 12 4.6" fill="none" stroke="#111" stroke-width="1" stroke-linecap="round"/></svg>
<div class="t" style="left:880.1px;top:318.4px;font-size:13px;line-height:21px;color:#164B35;letter-spacing:0.17px;-webkit-text-stroke:0.2px #164B35">97</div>
<svg class="i" style="left:979.3px;top:324px;" width="13.3" height="8" viewBox="0 0 13.3 8"><g transform="scale(1)"><path d="M1.55 6.5 L5.5 2.9 L8 5.1 L11.75 1.5" fill="none" stroke="#44546F" stroke-width="2.1" stroke-linecap="round" stroke-linejoin="round"/><circle cx="1.55" cy="6.5" r="1.5" fill="#44546F"/><circle cx="11.75" cy="1.5" r="1.5" fill="#44546F"/></g></svg>
<div class="t" style="left:997.62px;top:317.7px;font-size:12.5px;line-height:20px;color:#2C3E5D;-webkit-text-stroke:0.15px #2C3E5D">12</div>
<svg class="i" style="left:1093.5px;top:321.2px;" width="14.9" height="13.4" viewBox="0 0 14.9 13.4"><g transform="scale(1)"><ellipse cx="7.45" cy="6.3" rx="6.65" ry="5.5" fill="none" stroke="#44546F" stroke-width="1.6"/><path d="M10.4 11.6 L14 13.2 L13.1 9.9 Z" fill="#44546F"/><path d="M4.2 5.1 H10.8 M4.2 7.6 H6.7" stroke="#44546F" stroke-width="1.45" stroke-linecap="round"/></g></svg>
<div class="t" style="left:1112.75px;top:317.7px;font-size:12.5px;line-height:20px;color:#2C3E5D;-webkit-text-stroke:0.15px #2C3E5D">6</div>
<div class="b" style="left:264.5px;top:349px;width:1298px;height:1px;background:#DCDFE4"></div>
<div class="b" style="left:628px;top:350px;width:1px;height:41px;background:#DCDFE4"></div>
<div class="b" style="left:839px;top:350px;width:1px;height:41px;background:#DCDFE4"></div>
<div class="b" style="left:960px;top:350px;width:1px;height:41px;background:#DCDFE4"></div>
<div class="b" style="left:1081px;top:350px;width:1px;height:41px;background:#DCDFE4"></div>
<div class="b" style="left:1224px;top:350px;width:1px;height:41px;background:#DCDFE4"></div>
<div class="b" style="left:296px;top:363.9px;width:14px;height:14px;border:2px solid #DFE1E6;border-radius:3px;background:#F7F8F9;box-sizing:border-box"></div>
<div class="t" style="left:324.77px;top:359px;font-size:15px;line-height:24px;color:#22365A">Biometrics</div>
<div class="b" style="left:641px;top:361px;width:82px;height:20px;background:#E9F2FF;border-radius:3px"></div>
<svg class="i" style="left:646.6px;top:362.5px;" width="16" height="16" viewBox="0 0 16 16"><path d="M2.4 7.6 V5.6 C2.4 3.7 3.7 2.3 5.3 2.3 C6.4 2.3 7.2 2.8 7.7 3.6" fill="none" stroke="#AAB8C2" stroke-width="1.6"/><rect x="0" y="7.1" width="10.2" height="8.9" rx="1.2" fill="#FFAC33"/><circle cx="11.7" cy="3.9" r="3.9" fill="#C1694F"/><circle cx="12" cy="2" r="0.9" fill="#E8F1FF"/><path d="M10.2 6.5 H12.9 V9 L12.4 9.6 L12.9 10.3 V11.4 L12.4 12 L12.9 12.8 V14.4 L11.6 15.8 L10.2 15 Z" fill="#C1694F"/></svg>
<div class="t" style="left:669.78px;top:360.4px;font-size:13px;line-height:21px;color:#09326C;letter-spacing:0.29px;-webkit-text-stroke:0.32px #09326C">Security</div>
<div class="b" style="left:852px;top:361px;width:49px;height:20px;background:#BAF3DB;border-radius:3px"></div>
<svg class="i" style="left:858.3px;top:362.5px;" width="16" height="16" viewBox="0 0 16 16"><path d="M0.3 15.6 C0.4 13.6 1.3 11.6 3.4 10.4 L5.9 12.6 C4.7 14.6 2.6 15.5 0.3 15.6 Z" fill="#FFAC33"/><path d="M1.5 14.4 C1.9 13.2 2.6 12.3 3.6 11.6 L4.7 12.6 C4 13.6 3 14.2 1.5 14.4 Z" fill="#FFCC4D"/><path d="M0.6 7.7 L3.6 5.4 L6.4 5.6 L3.9 9.8 L3.4 8.2 Z" fill="#A0041E"/><path d="M8.2 15.4 L10.7 12.4 L10.4 9.6 L6.2 12.1 L7.7 12.6 Z" fill="#A0041E"/><path d="M15.7 0.2 C10.8 0.8 5.8 3.6 3.6 9.5 L6.5 12.3 C12.2 10.3 15.1 5.2 15.7 0.2 Z" fill="#55ACEE"/><path d="M3.5 11.5 L9.7 5.8 L6.3 10.8 Z" fill="#A0041E"/><path d="M10.5 2.8 C11.4 2.9 12 3.6 12 4.6" fill="none" stroke="#111" stroke-width="1" stroke-linecap="round"/></svg>
<div class="t" style="left:880.15px;top:360.4px;font-size:13px;line-height:21px;color:#164B35;letter-spacing:1px;-webkit-text-stroke:0.2px #164B35">80</div>
<svg class="i" style="left:979.3px;top:366px;" width="13.3" height="8" viewBox="0 0 13.3 8"><g transform="scale(1)"><path d="M1.55 6.5 L5.5 2.9 L8 5.1 L11.75 1.5" fill="none" stroke="#44546F" stroke-width="2.1" stroke-linecap="round" stroke-linejoin="round"/><circle cx="1.55" cy="6.5" r="1.5" fill="#44546F"/><circle cx="11.75" cy="1.5" r="1.5" fill="#44546F"/></g></svg>
<div class="t" style="left:997.95px;top:359.7px;font-size:12.5px;line-height:20px;color:#2C3E5D;-webkit-text-stroke:0.15px #2C3E5D">2</div>
<svg class="i" style="left:1093.5px;top:363.2px;" width="14.9" height="13.4" viewBox="0 0 14.9 13.4"><g transform="scale(1)"><ellipse cx="7.45" cy="6.3" rx="6.65" ry="5.5" fill="none" stroke="#44546F" stroke-width="1.6"/><path d="M10.4 11.6 L14 13.2 L13.1 9.9 Z" fill="#44546F"/><path d="M4.2 5.1 H10.8 M4.2 7.6 H6.7" stroke="#44546F" stroke-width="1.45" stroke-linecap="round"/></g></svg>
<div class="t" style="left:1112.42px;top:359.7px;font-size:12.5px;line-height:20px;color:#2C3E5D;-webkit-text-stroke:0.15px #2C3E5D">1</div>
<div class="b" style="left:264.5px;top:391px;width:1298px;height:1px;background:#DCDFE4"></div>
<div class="b" style="left:628px;top:392px;width:1px;height:41px;background:#DCDFE4"></div>
<div class="b" style="left:839px;top:392px;width:1px;height:41px;background:#DCDFE4"></div>
<div class="b" style="left:960px;top:392px;width:1px;height:41px;background:#DCDFE4"></div>
<div class="b" style="left:1081px;top:392px;width:1px;height:41px;background:#DCDFE4"></div>
<div class="b" style="left:1224px;top:392px;width:1px;height:41px;background:#DCDFE4"></div>
<div class="b" style="left:296px;top:405.9px;width:14px;height:14px;border:2px solid #DFE1E6;border-radius:3px;background:#F7F8F9;box-sizing:border-box"></div>
<div class="t" style="left:325.32px;top:401px;font-size:15px;line-height:24px;color:#22365A">Self service: insurance</div>
<div class="b" style="left:641px;top:403px;width:101.5px;height:20px;background:#E9F2FF;border-radius:3px"></div>
<svg class="i" style="left:646.6px;top:404.5px;" width="16" height="16" viewBox="0 0 16 16"><path d="M0.2 14.3 C0.2 9.5 1.6 4.3 6 0.2 C7.4 0.7 8.7 1.9 9.4 2.7 L9.1 3.8 L9.4 4.6 C9 5.4 8.4 5.9 7.7 5.5 C6.8 5.2 5.9 5.5 5.5 6.5 C5.3 7.5 5.3 8.4 5.7 9.8 C7 8.2 8.8 7.5 10.6 7.5 C13.6 7.5 15.5 9.2 15.5 11.5 C15.5 14 13.2 16 9.5 16 C6.6 16 5 15.1 2.9 14.6 Z" fill="#FFDC5D"/><path d="M6.4 12.4 C8.2 13.9 11.2 13.6 13.1 11.1" fill="none" stroke="#F19020" stroke-width="0.8" stroke-linecap="round"/><path d="M6.9 2.6 L8.1 3.6" stroke="#F19020" stroke-width="0.6" stroke-linecap="round"/></svg>
<div class="t" style="left:669.78px;top:402.4px;font-size:13px;line-height:21px;color:#09326C;letter-spacing:0.17px;-webkit-text-stroke:0.32px #09326C">Self service</div>
<div class="b" style="left:852px;top:403px;width:49px;height:20px;background:#BAF3DB;border-radius:3px"></div>
<svg class="i" style="left:858.3px;top:404.5px;" width="16" height="16" viewBox="0 0 16 16"><path d="M0.3 15.6 C0.4 13.6 1.3 11.6 3.4 10.4 L5.9 12.6 C4.7 14.6 2.6 15.5 0.3 15.6 Z" fill="#FFAC33"/><path d="M1.5 14.4 C1.9 13.2 2.6 12.3 3.6 11.6 L4.7 12.6 C4 13.6 3 14.2 1.5 14.4 Z" fill="#FFCC4D"/><path d="M0.6 7.7 L3.6 5.4 L6.4 5.6 L3.9 9.8 L3.4 8.2 Z" fill="#A0041E"/><path d="M8.2 15.4 L10.7 12.4 L10.4 9.6 L6.2 12.1 L7.7 12.6 Z" fill="#A0041E"/><path d="M15.7 0.2 C10.8 0.8 5.8 3.6 3.6 9.5 L6.5 12.3 C12.2 10.3 15.1 5.2 15.7 0.2 Z" fill="#55ACEE"/><path d="M3.5 11.5 L9.7 5.8 L6.3 10.8 Z" fill="#A0041E"/><path d="M10.5 2.8 C11.4 2.9 12 3.6 12 4.6" fill="none" stroke="#111" stroke-width="1" stroke-linecap="round"/></svg>
<div class="t" style="left:880.15px;top:402.4px;font-size:13px;line-height:21px;color:#164B35;letter-spacing:1px;-webkit-text-stroke:0.2px #164B35">80</div>
<svg class="i" style="left:979.3px;top:408px;" width="13.3" height="8" viewBox="0 0 13.3 8"><g transform="scale(1)"><path d="M1.55 6.5 L5.5 2.9 L8 5.1 L11.75 1.5" fill="none" stroke="#44546F" stroke-width="2.1" stroke-linecap="round" stroke-linejoin="round"/><circle cx="1.55" cy="6.5" r="1.5" fill="#44546F"/><circle cx="11.75" cy="1.5" r="1.5" fill="#44546F"/></g></svg>
<div class="t" style="left:998.1px;top:401.7px;font-size:12.5px;line-height:20px;color:#2C3E5D;-webkit-text-stroke:0.15px #2C3E5D">3</div>
<svg class="i" style="left:1093.5px;top:405.2px;" width="14.9" height="13.4" viewBox="0 0 14.9 13.4"><g transform="scale(1)"><ellipse cx="7.45" cy="6.3" rx="6.65" ry="5.5" fill="none" stroke="#8590A2" stroke-width="1.6"/><path d="M10.4 11.6 L14 13.2 L13.1 9.9 Z" fill="#8590A2"/><path d="M4.2 5.1 H10.8 M4.2 7.6 H6.7" stroke="#8590A2" stroke-width="1.45" stroke-linecap="round"/></g></svg>
<div class="b" style="left:264.5px;top:433px;width:1298px;height:1px;background:#DCDFE4"></div>
<div class="b" style="left:628px;top:434px;width:1px;height:41px;background:#DCDFE4"></div>
<div class="b" style="left:839px;top:434px;width:1px;height:41px;background:#DCDFE4"></div>
<div class="b" style="left:960px;top:434px;width:1px;height:41px;background:#DCDFE4"></div>
<div class="b" style="left:1081px;top:434px;width:1px;height:41px;background:#DCDFE4"></div>
<div class="b" style="left:1224px;top:434px;width:1px;height:41px;background:#DCDFE4"></div>
<div class="b" style="left:296px;top:447.9px;width:14px;height:14px;border:2px solid #DFE1E6;border-radius:3px;background:#F7F8F9;box-sizing:border-box"></div>
<div class="t" style="left:324.77px;top:443px;font-size:15px;line-height:24px;color:#22365A">Disposable virtual cards</div>
<div class="b" style="left:641px;top:445px;width:110px;height:20px;background:#E9F2FF;border-radius:3px"></div>
<svg class="i" style="left:646.6px;top:446.5px;" width="16" height="16" viewBox="0 0 16 16"><circle cx="8" cy="8.3" r="7.8" fill="#FFCC4D"/><path d="M3.9 9.6 C5.3 9.9 6.6 10 8 10 C9.4 10 10.7 9.9 12.1 9.6 C12.5 9.5 12.9 9.7 12.9 10.2 C12.9 12 11 14 8 14 C5 14 3.1 12 3.1 10.2 C3.1 9.7 3.5 9.5 3.9 9.6 Z" fill="#664500"/><g transform="translate(3.9 3.9) rotate(-18)"><path d="M0 6.2 C-2.6 4.2 -4.1 2.7 -4.1 0.6 C-4.1 -1 -3 -2.1 -1.6 -2.1 C-0.9 -2.1 -0.3 -1.7 0 -1.1 C0.3 -1.7 0.9 -2.1 1.6 -2.1 C3 -2.1 4.1 -1 4.1 0.6 C4.1 2.7 2.6 4.2 0 6.2 Z" fill="#DD2E44"/></g><g transform="translate(12.1 3.9) rotate(18)"><path d="M0 6.2 C-2.6 4.2 -4.1 2.7 -4.1 0.6 C-4.1 -1 -3 -2.1 -1.6 -2.1 C-0.9 -2.1 -0.3 -1.7 0 -1.1 C0.3 -1.7 0.9 -2.1 1.6 -2.1 C3 -2.1 4.1 -1 4.1 0.6 C4.1 2.7 2.6 4.2 0 6.2 Z" fill="#DD2E44"/></g></svg>
<div class="t" style="left:669.31px;top:444.4px;font-size:13px;line-height:21px;color:#09326C;letter-spacing:0.2px;-webkit-text-stroke:0.32px #09326C">Delight users</div>
<div class="b" style="left:852px;top:445px;width:47px;height:20px;background:#BAF3DB;border-radius:3px"></div>
<svg class="i" style="left:858.3px;top:446.5px;" width="16" height="16" viewBox="0 0 16 16"><path d="M0.3 15.6 C0.4 13.6 1.3 11.6 3.4 10.4 L5.9 12.6 C4.7 14.6 2.6 15.5 0.3 15.6 Z" fill="#FFAC33"/><path d="M1.5 14.4 C1.9 13.2 2.6 12.3 3.6 11.6 L4.7 12.6 C4 13.6 3 14.2 1.5 14.4 Z" fill="#FFCC4D"/><path d="M0.6 7.7 L3.6 5.4 L6.4 5.6 L3.9 9.8 L3.4 8.2 Z" fill="#A0041E"/><path d="M8.2 15.4 L10.7 12.4 L10.4 9.6 L6.2 12.1 L7.7 12.6 Z" fill="#A0041E"/><path d="M15.7 0.2 C10.8 0.8 5.8 3.6 3.6 9.5 L6.5 12.3 C12.2 10.3 15.1 5.2 15.7 0.2 Z" fill="#55ACEE"/><path d="M3.5 11.5 L9.7 5.8 L6.3 10.8 Z" fill="#A0041E"/><path d="M10.5 2.8 C11.4 2.9 12 3.6 12 4.6" fill="none" stroke="#111" stroke-width="1" stroke-linecap="round"/></svg>
<div class="t" style="left:880.05px;top:444.4px;font-size:13px;line-height:21px;color:#164B35;letter-spacing:0.2px;-webkit-text-stroke:0.2px #164B35">79</div>
<svg class="i" style="left:979.3px;top:450px;" width="13.3" height="8" viewBox="0 0 13.3 8"><g transform="scale(1)"><path d="M1.55 6.5 L5.5 2.9 L8 5.1 L11.75 1.5" fill="none" stroke="#44546F" stroke-width="2.1" stroke-linecap="round" stroke-linejoin="round"/><circle cx="1.55" cy="6.5" r="1.5" fill="#44546F"/><circle cx="11.75" cy="1.5" r="1.5" fill="#44546F"/></g></svg>
<div class="t" style="left:997.95px;top:443.7px;font-size:12.5px;line-height:20px;color:#2C3E5D;-webkit-text-stroke:0.15px #2C3E5D">6</div>
<svg class="i" style="left:1093.5px;top:447.2px;" width="14.9" height="13.4" viewBox="0 0 14.9 13.4"><g transform="scale(1)"><ellipse cx="7.45" cy="6.3" rx="6.65" ry="5.5" fill="none" stroke="#44546F" stroke-width="1.6"/><path d="M10.4 11.6 L14 13.2 L13.1 9.9 Z" fill="#44546F"/><path d="M4.2 5.1 H10.8 M4.2 7.6 H6.7" stroke="#44546F" stroke-width="1.45" stroke-linecap="round"/></g></svg>
<div class="t" style="left:1112.9px;top:443.7px;font-size:12.5px;line-height:20px;color:#2C3E5D;-webkit-text-stroke:0.15px #2C3E5D">3</div>
<div class="b" style="left:263.5px;top:484px;width:1300px;height:210px;border:1px solid #DCDFE4;border-radius:6px 0 0 6px;box-sizing:border-box;background:#fff"></div>
<div class="b" style="left:264.5px;top:485px;width:1298px;height:40px;background:#F8F9FA;border-radius:5px 0 0 0"></div>
<div class="b" style="left:264.5px;top:525px;width:1298px;height:1px;background:#DCDFE4"></div>
<svg class="i" style="left:277.9px;top:503px;" width="8.2" height="5.8" viewBox="0 0 8.2 5.8"><path d="M1.1 1.1 L4.1 4.5 L7.1 1.1" fill="none" stroke="#44546F" stroke-width="2.2" stroke-linecap="round" stroke-linejoin="round"/></svg>
<div class="b" style="left:296px;top:498.5px;width:14px;height:14px;border:2px solid #DFE1E6;border-radius:3px;background:#F7F8F9;box-sizing:border-box"></div>
<div class="b" style="left:326.2px;top:496.2px;width:36px;height:19.6px;background:#DFD8FD;border-radius:3px"></div>
<div class="t" style="left:329.52px;top:495.4px;font-size:13px;line-height:21px;color:#352C63;letter-spacing:0.15px;-webkit-text-stroke:0.35px #352C63">Next</div>
<div class="t" style="left:370.43px;top:496.5px;font-size:12px;line-height:19px;color:#626F86;letter-spacing:-0.23px">4 ideas</div>
<div class="b" style="left:628px;top:526px;width:1px;height:41px;background:#DCDFE4"></div>
<div class="b" style="left:839px;top:526px;width:1px;height:41px;background:#DCDFE4"></div>
<div class="b" style="left:960px;top:526px;width:1px;height:41px;background:#DCDFE4"></div>
<div class="b" style="left:1081px;top:526px;width:1px;height:41px;background:#DCDFE4"></div>
<div class="b" style="left:1224px;top:526px;width:1px;height:41px;background:#DCDFE4"></div>
<div class="b" style="left:296px;top:539px;width:14px;height:14px;border:2px solid #DFE1E6;border-radius:3px;background:#F7F8F9;box-sizing:border-box"></div>
<div class="t" style="left:324.77px;top:534.1px;font-size:15px;line-height:24px;color:#22365A">Budgeting tool</div>
<div class="b" style="left:637px;top:536.1px;width:110px;height:20px;background:#E9F2FF;border-radius:3px"></div>
<svg class="i" style="left:642.6px;top:537.6px;" width="16" height="16" viewBox="0 0 16 16"><circle cx="8" cy="8.3" r="7.8" fill="#FFCC4D"/><path d="M3.9 9.6 C5.3 9.9 6.6 10 8 10 C9.4 10 10.7 9.9 12.1 9.6 C12.5 9.5 12.9 9.7 12.9 10.2 C12.9 12 11 14 8 14 C5 14 3.1 12 3.1 10.2 C3.1 9.7 3.5 9.5 3.9 9.6 Z" fill="#664500"/><g transform="translate(3.9 3.9) rotate(-18)"><path d="M0 6.2 C-2.6 4.2 -4.1 2.7 -4.1 0.6 C-4.1 -1 -3 -2.1 -1.6 -2.1 C-0.9 -2.1 -0.3 -1.7 0 -1.1 C0.3 -1.7 0.9 -2.1 1.6 -2.1 C3 -2.1 4.1 -1 4.1 0.6 C4.1 2.7 2.6 4.2 0 6.2 Z" fill="#DD2E44"/></g><g transform="translate(12.1 3.9) rotate(18)"><path d="M0 6.2 C-2.6 4.2 -4.1 2.7 -4.1 0.6 C-4.1 -1 -3 -2.1 -1.6 -2.1 C-0.9 -2.1 -0.3 -1.7 0 -1.1 C0.3 -1.7 0.9 -2.1 1.6 -2.1 C3 -2.1 4.1 -1 4.1 0.6 C4.1 2.7 2.6 4.2 0 6.2 Z" fill="#DD2E44"/></g></svg>
<div class="t" style="left:665.31px;top:535.5px;font-size:13px;line-height:21px;color:#09326C;letter-spacing:0.2px;-webkit-text-stroke:0.32px #09326C">Delight users</div>
<div class="b" style="left:852px;top:536.1px;width:48px;height:20px;background:#F8E6A0;border-radius:3px"></div>
<svg class="i" style="left:858.3px;top:537.6px;" width="16" height="16" viewBox="0 0 16 16"><circle cx="7.9" cy="7.9" r="7.9" fill="#CCD6DD"/><circle cx="7.9" cy="7.9" r="6.2" fill="#3B88C3"/><circle cx="7.9" cy="7.9" r="4.5" fill="#DD2E44"/><circle cx="7.9" cy="7.9" r="2.6" fill="#FFAC33"/><path d="M7.6 7.3 L14 14" stroke="#C1694F" stroke-width="0.8" stroke-linecap="round"/><ellipse cx="13.1" cy="10.6" rx="2.6" ry="1.3" transform="rotate(38 13.1 10.6)" fill="#292F33"/><ellipse cx="10.6" cy="13.1" rx="1.3" ry="2.6" transform="rotate(52 10.6 13.1)" fill="#292F33"/></svg>
<div class="t" style="left:880.05px;top:535.5px;font-size:13px;line-height:21px;color:#533F04;letter-spacing:1.15px;-webkit-text-stroke:0.2px #533F04">78</div>
<svg class="i" style="left:979.3px;top:541.1px;" width="13.3" height="8" viewBox="0 0 13.3 8"><g transform="scale(1)"><path d="M1.55 6.5 L5.5 2.9 L8 5.1 L11.75 1.5" fill="none" stroke="#8590A2" stroke-width="2.1" stroke-linecap="round" stroke-linejoin="round"/><circle cx="1.55" cy="6.5" r="1.5" fill="#8590A2"/><circle cx="11.75" cy="1.5" r="1.5" fill="#8590A2"/></g></svg>
<svg class="i" style="left:1100.6px;top:538.3px;" width="14.9" height="13.4" viewBox="0 0 14.9 13.4"><g transform="scale(1)"><ellipse cx="7.45" cy="6.3" rx="6.65" ry="5.5" fill="none" stroke="#8590A2" stroke-width="1.6"/><path d="M10.4 11.6 L14 13.2 L13.1 9.9 Z" fill="#8590A2"/><path d="M4.2 5.1 H10.8 M4.2 7.6 H6.7" stroke="#8590A2" stroke-width="1.45" stroke-linecap="round"/></g></svg>
<div class="b" style="left:264.5px;top:567px;width:1298px;height:1px;background:#DCDFE4"></div>
<div class="b" style="left:628px;top:568px;width:1px;height:41px;background:#DCDFE4"></div>
<div class="b" style="left:839px;top:568px;width:1px;height:41px;background:#DCDFE4"></div>
<div class="b" style="left:960px;top:568px;width:1px;height:41px;background:#DCDFE4"></div>
<div class="b" style="left:1081px;top:568px;width:1px;height:41px;background:#DCDFE4"></div>
<div class="b" style="left:1224px;top:568px;width:1px;height:41px;background:#DCDFE4"></div>
<div class="b" style="left:296px;top:581px;width:14px;height:14px;border:2px solid #DFE1E6;border-radius:3px;background:#F7F8F9;box-sizing:border-box"></div>
<div class="t" style="left:325.25px;top:576.1px;font-size:15px;line-height:24px;color:#22365A">CS chatbot AI</div>
<div class="b" style="left:637px;top:578.1px;width:107px;height:20px;background:#E9F2FF;border-radius:3px"></div>
<svg class="i" style="left:642.6px;top:579.6px;" width="16" height="16" viewBox="0 0 16 16"><g transform="rotate(45 8 8)"><rect x="4.9" y="-2.6" width="6.2" height="20.6" rx="3.1" fill="#8899A6"/><rect x="6.1" y="-1.4" width="3.8" height="18.2" rx="1.9" fill="#CCD6DD"/><path d="M6.1 4.2 H9.9 V14.9 C9.9 15.9 9.1 16.8 8 16.8 C6.9 16.8 6.1 15.9 6.1 14.9 Z" fill="#5FD76F"/><rect x="6.1" y="4" width="3.8" height="0.8" fill="#21B04B"/><circle cx="7.2" cy="9" r="0.45" fill="#21B04B"/><circle cx="8.6" cy="11.5" r="0.5" fill="#21B04B"/><circle cx="7.5" cy="14.2" r="0.6" fill="#21B04B"/></g></svg>
<div class="t" style="left:665.31px;top:577.5px;font-size:13px;line-height:21px;color:#09326C;letter-spacing:0.39px;-webkit-text-stroke:0.32px #09326C">Differentiate</div>
<div class="b" style="left:852px;top:578.1px;width:47px;height:20px;background:#F8E6A0;border-radius:3px"></div>
<svg class="i" style="left:858.3px;top:579.6px;" width="16" height="16" viewBox="0 0 16 16"><circle cx="7.9" cy="7.9" r="7.9" fill="#CCD6DD"/><circle cx="7.9" cy="7.9" r="6.2" fill="#3B88C3"/><circle cx="7.9" cy="7.9" r="4.5" fill="#DD2E44"/><circle cx="7.9" cy="7.9" r="2.6" fill="#FFAC33"/><path d="M7.6 7.3 L14 14" stroke="#C1694F" stroke-width="0.8" stroke-linecap="round"/><ellipse cx="13.1" cy="10.6" rx="2.6" ry="1.3" transform="rotate(38 13.1 10.6)" fill="#292F33"/><ellipse cx="10.6" cy="13.1" rx="1.3" ry="2.6" transform="rotate(52 10.6 13.1)" fill="#292F33"/></svg>
<div class="t" style="left:880.05px;top:577.5px;font-size:13px;line-height:21px;color:#533F04;letter-spacing:0.15px;-webkit-text-stroke:0.2px #533F04">76</div>
<svg class="i" style="left:979.3px;top:583.1px;" width="13.3" height="8" viewBox="0 0 13.3 8"><g transform="scale(1)"><path d="M1.55 6.5 L5.5 2.9 L8 5.1 L11.75 1.5" fill="none" stroke="#8590A2" stroke-width="2.1" stroke-linecap="round" stroke-linejoin="round"/><circle cx="1.55" cy="6.5" r="1.5" fill="#8590A2"/><circle cx="11.75" cy="1.5" r="1.5" fill="#8590A2"/></g></svg>
<svg class="i" style="left:1100.6px;top:580.3px;" width="14.9" height="13.4" viewBox="0 0 14.9 13.4"><g transform="scale(1)"><ellipse cx="7.45" cy="6.3" rx="6.65" ry="5.5" fill="none" stroke="#8590A2" stroke-width="1.6"/><path d="M10.4 11.6 L14 13.2 L13.1 9.9 Z" fill="#8590A2"/><path d="M4.2 5.1 H10.8 M4.2 7.6 H6.7" stroke="#8590A2" stroke-width="1.45" stroke-linecap="round"/></g></svg>
<div class="b" style="left:264.5px;top:609px;width:1298px;height:1px;background:#DCDFE4"></div>
<div class="b" style="left:628px;top:610px;width:1px;height:41px;background:#DCDFE4"></div>
<div class="b" style="left:839px;top:610px;width:1px;height:41px;background:#DCDFE4"></div>
<div class="b" style="left:960px;top:610px;width:1px;height:41px;background:#DCDFE4"></div>
<div class="b" style="left:1081px;top:610px;width:1px;height:41px;background:#DCDFE4"></div>
<div class="b" style="left:1224px;top:610px;width:1px;height:41px;background:#DCDFE4"></div>
<div class="b" style="left:296px;top:623px;width:14px;height:14px;border:2px solid #DFE1E6;border-radius:3px;background:#F7F8F9;box-sizing:border-box"></div>
<div class="t" style="left:325.25px;top:618.1px;font-size:15px;line-height:24px;color:#22365A">Gold rewards marketing push</div>
<div class="b" style="left:637px;top:620.1px;width:105px;height:20px;background:#E9F2FF;border-radius:3px"></div>
<svg class="i" style="left:642.6px;top:621.6px;" width="16" height="16" viewBox="0 0 16 16"><path d="M0.8 8.1 L3 4.6 L5.3 5.3 L7.4 4.9 L10.6 7.4 L12.7 10.4 L12.2 12.6 L10.6 13.8 L9.7 14.5 L7.8 14.5 L5.9 13.8 L4.2 12.2 Z" fill="#FFDC5D"/><path d="M15.9 7.8 L14.2 4.4 L12.4 5.1 L10.9 4.6 L10.5 3.2 C10.3 2.6 9.6 2.5 9.3 3 L9.6 4.2 L8.4 3.6 C7.9 3.1 7.1 3.4 7.3 4.1 L8.6 5.6 L7.8 6.2 L9.9 8.2 L12 10.6 L12.6 12 Z" fill="#FFCC4D"/><path d="M8.8 9.6 L11.2 11.3 M7.6 10.8 L10.1 12.6 M6.3 11.9 L8.8 13.6" stroke="#F19020" stroke-width="0.55" stroke-linecap="round" opacity="0.8"/><circle cx="6.2" cy="13.3" r="0.9" fill="#FFDC5D"/><circle cx="7.9" cy="14.1" r="0.9" fill="#FFDC5D"/><circle cx="9.7" cy="14.1" r="0.9" fill="#FFDC5D"/><circle cx="11.4" cy="13.2" r="0.9" fill="#FFDC5D"/></svg>
<div class="t" style="left:665.31px;top:619.5px;font-size:13px;line-height:21px;color:#09326C;letter-spacing:0.27px;-webkit-text-stroke:0.32px #09326C">Build loyalty</div>
<div class="b" style="left:852px;top:620.1px;width:47px;height:20px;background:#F8E6A0;border-radius:3px"></div>
<svg class="i" style="left:858.3px;top:621.6px;" width="16" height="16" viewBox="0 0 16 16"><circle cx="7.9" cy="7.9" r="7.9" fill="#CCD6DD"/><circle cx="7.9" cy="7.9" r="6.2" fill="#3B88C3"/><circle cx="7.9" cy="7.9" r="4.5" fill="#DD2E44"/><circle cx="7.9" cy="7.9" r="2.6" fill="#FFAC33"/><path d="M7.6 7.3 L14 14" stroke="#C1694F" stroke-width="0.8" stroke-linecap="round"/><ellipse cx="13.1" cy="10.6" rx="2.6" ry="1.3" transform="rotate(38 13.1 10.6)" fill="#292F33"/><ellipse cx="10.6" cy="13.1" rx="1.3" ry="2.6" transform="rotate(52 10.6 13.1)" fill="#292F33"/></svg>
<div class="t" style="left:880.05px;top:619.5px;font-size:13px;line-height:21px;color:#533F04;letter-spacing:0.12px;-webkit-text-stroke:0.2px #533F04">75</div>
<svg class="i" style="left:979.3px;top:625.1px;" width="13.3" height="8" viewBox="0 0 13.3 8"><g transform="scale(1)"><path d="M1.55 6.5 L5.5 2.9 L8 5.1 L11.75 1.5" fill="none" stroke="#44546F" stroke-width="2.1" stroke-linecap="round" stroke-linejoin="round"/><circle cx="1.55" cy="6.5" r="1.5" fill="#44546F"/><circle cx="11.75" cy="1.5" r="1.5" fill="#44546F"/></g></svg>
<div class="t" style="left:997.95px;top:618.8px;font-size:12.5px;line-height:20px;color:#2C3E5D;-webkit-text-stroke:0.15px #2C3E5D">2</div>
<svg class="i" style="left:1100.6px;top:622.3px;" width="14.9" height="13.4" viewBox="0 0 14.9 13.4"><g transform="scale(1)"><ellipse cx="7.45" cy="6.3" rx="6.65" ry="5.5" fill="none" stroke="#44546F" stroke-width="1.6"/><path d="M10.4 11.6 L14 13.2 L13.1 9.9 Z" fill="#44546F"/><path d="M4.2 5.1 H10.8 M4.2 7.6 H6.7" stroke="#44546F" stroke-width="1.45" stroke-linecap="round"/></g></svg>
<div class="t" style="left:1120px;top:618.8px;font-size:12.5px;line-height:20px;color:#2C3E5D;-webkit-text-stroke:0.15px #2C3E5D">3</div>
<div class="b" style="left:264.5px;top:651px;width:1298px;height:1px;background:#DCDFE4"></div>
<div class="b" style="left:628px;top:652px;width:1px;height:41px;background:#DCDFE4"></div>
<div class="b" style="left:839px;top:652px;width:1px;height:41px;background:#DCDFE4"></div>
<div class="b" style="left:960px;top:652px;width:1px;height:41px;background:#DCDFE4"></div>
<div class="b" style="left:1081px;top:652px;width:1px;height:41px;background:#DCDFE4"></div>
<div class="b" style="left:1224px;top:652px;width:1px;height:41px;background:#DCDFE4"></div>
<div class="b" style="left:296px;top:665px;width:14px;height:14px;border:2px solid #DFE1E6;border-radius:3px;background:#F7F8F9;box-sizing:border-box"></div>
<div class="t" style="left:324.62px;top:660.1px;font-size:15px;line-height:24px;color:#22365A">Instant transactions</div>
<div class="b" style="left:637px;top:662.1px;width:110px;height:20px;background:#E9F2FF;border-radius:3px"></div>
<svg class="i" style="left:642.6px;top:663.6px;" width="16" height="16" viewBox="0 0 16 16"><circle cx="8" cy="8.3" r="7.8" fill="#FFCC4D"/><path d="M3.9 9.6 C5.3 9.9 6.6 10 8 10 C9.4 10 10.7 9.9 12.1 9.6 C12.5 9.5 12.9 9.7 12.9 10.2 C12.9 12 11 14 8 14 C5 14 3.1 12 3.1 10.2 C3.1 9.7 3.5 9.5 3.9 9.6 Z" fill="#664500"/><g transform="translate(3.9 3.9) rotate(-18)"><path d="M0 6.2 C-2.6 4.2 -4.1 2.7 -4.1 0.6 C-4.1 -1 -3 -2.1 -1.6 -2.1 C-0.9 -2.1 -0.3 -1.7 0 -1.1 C0.3 -1.7 0.9 -2.1 1.6 -2.1 C3 -2.1 4.1 -1 4.1 0.6 C4.1 2.7 2.6 4.2 0 6.2 Z" fill="#DD2E44"/></g><g transform="translate(12.1 3.9) rotate(18)"><path d="M0 6.2 C-2.6 4.2 -4.1 2.7 -4.1 0.6 C-4.1 -1 -3 -2.1 -1.6 -2.1 C-0.9 -2.1 -0.3 -1.7 0 -1.1 C0.3 -1.7 0.9 -2.1 1.6 -2.1 C3 -2.1 4.1 -1 4.1 0.6 C4.1 2.7 2.6 4.2 0 6.2 Z" fill="#DD2E44"/></g></svg>
<div class="t" style="left:665.31px;top:661.5px;font-size:13px;line-height:21px;color:#09326C;letter-spacing:0.2px;-webkit-text-stroke:0.32px #09326C">Delight users</div>
<div class="b" style="left:852px;top:662.1px;width:47px;height:20px;background:#F8E6A0;border-radius:3px"></div>
<svg class="i" style="left:858.3px;top:663.6px;" width="16" height="16" viewBox="0 0 16 16"><circle cx="7.9" cy="7.9" r="7.9" fill="#CCD6DD"/><circle cx="7.9" cy="7.9" r="6.2" fill="#3B88C3"/><circle cx="7.9" cy="7.9" r="4.5" fill="#DD2E44"/><circle cx="7.9" cy="7.9" r="2.6" fill="#FFAC33"/><path d="M7.6 7.3 L14 14" stroke="#C1694F" stroke-width="0.8" stroke-linecap="round"/><ellipse cx="13.1" cy="10.6" rx="2.6" ry="1.3" transform="rotate(38 13.1 10.6)" fill="#292F33"/><ellipse cx="10.6" cy="13.1" rx="1.3" ry="2.6" transform="rotate(52 10.6 13.1)" fill="#292F33"/></svg>
<div class="t" style="left:880.05px;top:661.5px;font-size:13px;line-height:21px;color:#533F04;letter-spacing:0.1px;-webkit-text-stroke:0.2px #533F04">70</div>
<svg class="i" style="left:979.3px;top:667.1px;" width="13.3" height="8" viewBox="0 0 13.3 8"><g transform="scale(1)"><path d="M1.55 6.5 L5.5 2.9 L8 5.1 L11.75 1.5" fill="none" stroke="#44546F" stroke-width="2.1" stroke-linecap="round" stroke-linejoin="round"/><circle cx="1.55" cy="6.5" r="1.5" fill="#44546F"/><circle cx="11.75" cy="1.5" r="1.5" fill="#44546F"/></g></svg>
<div class="t" style="left:997.62px;top:660.8px;font-size:12.5px;line-height:20px;color:#2C3E5D;-webkit-text-stroke:0.15px #2C3E5D">11</div>
<svg class="i" style="left:1100.6px;top:664.3px;" width="14.9" height="13.4" viewBox="0 0 14.9 13.4"><g transform="scale(1)"><ellipse cx="7.45" cy="6.3" rx="6.65" ry="5.5" fill="none" stroke="#44546F" stroke-width="1.6"/><path d="M10.4 11.6 L14 13.2 L13.1 9.9 Z" fill="#44546F"/><path d="M4.2 5.1 H10.8 M4.2 7.6 H6.7" stroke="#44546F" stroke-width="1.45" stroke-linecap="round"/></g></svg>
<div class="t" style="left:1119.52px;top:660.8px;font-size:12.5px;line-height:20px;color:#2C3E5D;-webkit-text-stroke:0.15px #2C3E5D">1</div>
<div class="b" style="left:263.5px;top:702px;width:1300px;height:126px;border:1px solid #DCDFE4;border-radius:6px 0 0 6px;box-sizing:border-box;background:#fff"></div>
<div class="b" style="left:264.5px;top:703px;width:1298px;height:40px;background:#F8F9FA;border-radius:5px 0 0 0"></div>
<div class="b" style="left:264.5px;top:743px;width:1298px;height:1px;background:#DCDFE4"></div>
<svg class="i" style="left:277.9px;top:721px;" width="8.2" height="5.8" viewBox="0 0 8.2 5.8"><path d="M1.1 1.1 L4.1 4.5 L7.1 1.1" fill="none" stroke="#44546F" stroke-width="2.2" stroke-linecap="round" stroke-linejoin="round"/></svg>
<div class="b" style="left:296px;top:716.5px;width:14px;height:14px;border:2px solid #DFE1E6;border-radius:3px;background:#F7F8F9;box-sizing:border-box"></div>
<div class="b" style="left:326.2px;top:714.2px;width:39px;height:19.6px;background:#F3F0FF;border-radius:3px"></div>
<div class="t" style="left:329.52px;top:713.4px;font-size:13px;line-height:21px;color:#352C63;letter-spacing:0.17px;-webkit-text-stroke:0.35px #352C63">Later</div>
<div class="t" style="left:373.1px;top:714.5px;font-size:12px;line-height:19px;color:#626F86;letter-spacing:-0.18px">7 ideas</div>
<div class="b" style="left:628px;top:744px;width:1px;height:41px;background:#DCDFE4"></div>
<div class="b" style="left:839px;top:744px;width:1px;height:41px;background:#DCDFE4"></div>
<div class="b" style="left:960px;top:744px;width:1px;height:41px;background:#DCDFE4"></div>
<div class="b" style="left:1081px;top:744px;width:1px;height:41px;background:#DCDFE4"></div>
<div class="b" style="left:1224px;top:744px;width:1px;height:41px;background:#DCDFE4"></div>
<div class="b" style="left:296px;top:757px;width:14px;height:14px;border:2px solid #DFE1E6;border-radius:3px;background:#F7F8F9;box-sizing:border-box"></div>
<div class="t" style="left:325.98px;top:752.1px;font-size:15px;line-height:24px;color:#22365A">Automated tasks</div>
<div class="b" style="left:637px;top:754.1px;width:110px;height:20px;background:#E9F2FF;border-radius:3px"></div>
<svg class="i" style="left:642.6px;top:755.6px;" width="16" height="16" viewBox="0 0 16 16"><circle cx="8" cy="8.3" r="7.8" fill="#FFCC4D"/><path d="M3.9 9.6 C5.3 9.9 6.6 10 8 10 C9.4 10 10.7 9.9 12.1 9.6 C12.5 9.5 12.9 9.7 12.9 10.2 C12.9 12 11 14 8 14 C5 14 3.1 12 3.1 10.2 C3.1 9.7 3.5 9.5 3.9 9.6 Z" fill="#664500"/><g transform="translate(3.9 3.9) rotate(-18)"><path d="M0 6.2 C-2.6 4.2 -4.1 2.7 -4.1 0.6 C-4.1 -1 -3 -2.1 -1.6 -2.1 C-0.9 -2.1 -0.3 -1.7 0 -1.1 C0.3 -1.7 0.9 -2.1 1.6 -2.1 C3 -2.1 4.1 -1 4.1 0.6 C4.1 2.7 2.6 4.2 0 6.2 Z" fill="#DD2E44"/></g><g transform="translate(12.1 3.9) rotate(18)"><path d="M0 6.2 C-2.6 4.2 -4.1 2.7 -4.1 0.6 C-4.1 -1 -3 -2.1 -1.6 -2.1 C-0.9 -2.1 -0.3 -1.7 0 -1.1 C0.3 -1.7 0.9 -2.1 1.6 -2.1 C3 -2.1 4.1 -1 4.1 0.6 C4.1 2.7 2.6 4.2 0 6.2 Z" fill="#DD2E44"/></g></svg>
<div class="t" style="left:665.31px;top:753.5px;font-size:13px;line-height:21px;color:#09326C;letter-spacing:0.2px;-webkit-text-stroke:0.32px #09326C">Delight users</div>
<div class="b" style="left:852px;top:754.1px;width:24px;height:20px;background:#FFF3E4;border-radius:3px"></div>
<div class="t" style="left:856.5px;top:753.5px;font-size:13px;line-height:21px;color:#5C3A06;letter-spacing:0.7px;-webkit-text-stroke:0.2px #5C3A06">56</div>
<svg class="i" style="left:979.3px;top:759.1px;" width="13.3" height="8" viewBox="0 0 13.3 8"><g transform="scale(1)"><path d="M1.55 6.5 L5.5 2.9 L8 5.1 L11.75 1.5" fill="none" stroke="#8590A2" stroke-width="2.1" stroke-linecap="round" stroke-linejoin="round"/><circle cx="1.55" cy="6.5" r="1.5" fill="#8590A2"/><circle cx="11.75" cy="1.5" r="1.5" fill="#8590A2"/></g></svg>
<svg class="i" style="left:1100.6px;top:756.3px;" width="14.9" height="13.4" viewBox="0 0 14.9 13.4"><g transform="scale(1)"><ellipse cx="7.45" cy="6.3" rx="6.65" ry="5.5" fill="none" stroke="#8590A2" stroke-width="1.6"/><path d="M10.4 11.6 L14 13.2 L13.1 9.9 Z" fill="#8590A2"/><path d="M4.2 5.1 H10.8 M4.2 7.6 H6.7" stroke="#8590A2" stroke-width="1.45" stroke-linecap="round"/></g></svg>
<div class="b" style="left:264.5px;top:785px;width:1298px;height:1px;background:#DCDFE4"></div>
<div class="b" style="left:628px;top:786px;width:1px;height:41px;background:#DCDFE4"></div>
<div class="b" style="left:839px;top:786px;width:1px;height:41px;background:#DCDFE4"></div>
<div class="b" style="left:960px;top:786px;width:1px;height:41px;background:#DCDFE4"></div>
<div class="b" style="left:1081px;top:786px;width:1px;height:41px;background:#DCDFE4"></div>
<div class="b" style="left:1224px;top:786px;width:1px;height:41px;background:#DCDFE4"></div>
<div class="b" style="left:296px;top:799px;width:14px;height:14px;border:2px solid #DFE1E6;border-radius:3px;background:#F7F8F9;box-sizing:border-box"></div>
<div class="t" style="left:324.77px;top:794.1px;font-size:15px;line-height:24px;color:#22365A">Personalised offers</div>
<div class="b" style="left:637px;top:796.1px;width:107px;height:20px;background:#E9F2FF;border-radius:3px"></div>
<svg class="i" style="left:642.6px;top:797.6px;" width="16" height="16" viewBox="0 0 16 16"><g transform="rotate(45 8 8)"><rect x="4.9" y="-2.6" width="6.2" height="20.6" rx="3.1" fill="#8899A6"/><rect x="6.1" y="-1.4" width="3.8" height="18.2" rx="1.9" fill="#CCD6DD"/><path d="M6.1 4.2 H9.9 V14.9 C9.9 15.9 9.1 16.8 8 16.8 C6.9 16.8 6.1 15.9 6.1 14.9 Z" fill="#5FD76F"/><rect x="6.1" y="4" width="3.8" height="0.8" fill="#21B04B"/><circle cx="7.2" cy="9" r="0.45" fill="#21B04B"/><circle cx="8.6" cy="11.5" r="0.5" fill="#21B04B"/><circle cx="7.5" cy="14.2" r="0.6" fill="#21B04B"/></g></svg>
<div class="t" style="left:665.31px;top:795.5px;font-size:13px;line-height:21px;color:#09326C;letter-spacing:0.39px;-webkit-text-stroke:0.32px #09326C">Differentiate</div>
<div class="b" style="left:852px;top:796.1px;width:24px;height:20px;background:#FFF3E4;border-radius:3px"></div>
<div class="t" style="left:856.5px;top:795.5px;font-size:13px;line-height:21px;color:#5C3A06;letter-spacing:0.78px;-webkit-text-stroke:0.2px #5C3A06">52</div>
<svg class="i" style="left:979.3px;top:801.1px;" width="13.3" height="8" viewBox="0 0 13.3 8"><g transform="scale(1)"><path d="M1.55 6.5 L5.5 2.9 L8 5.1 L11.75 1.5" fill="none" stroke="#8590A2" stroke-width="2.1" stroke-linecap="round" stroke-linejoin="round"/><circle cx="1.55" cy="6.5" r="1.5" fill="#8590A2"/><circle cx="11.75" cy="1.5" r="1.5" fill="#8590A2"/></g></svg>
<svg class="i" style="left:1100.6px;top:798.3px;" width="14.9" height="13.4" viewBox="0 0 14.9 13.4"><g transform="scale(1)"><ellipse cx="7.45" cy="6.3" rx="6.65" ry="5.5" fill="none" stroke="#44546F" stroke-width="1.6"/><path d="M10.4 11.6 L14 13.2 L13.1 9.9 Z" fill="#44546F"/><path d="M4.2 5.1 H10.8 M4.2 7.6 H6.7" stroke="#44546F" stroke-width="1.45" stroke-linecap="round"/></g></svg>
<div class="t" style="left:1119.85px;top:794.8px;font-size:12.5px;line-height:20px;color:#2C3E5D;-webkit-text-stroke:0.15px #2C3E5D">2</div>
</div></div></body></html>
